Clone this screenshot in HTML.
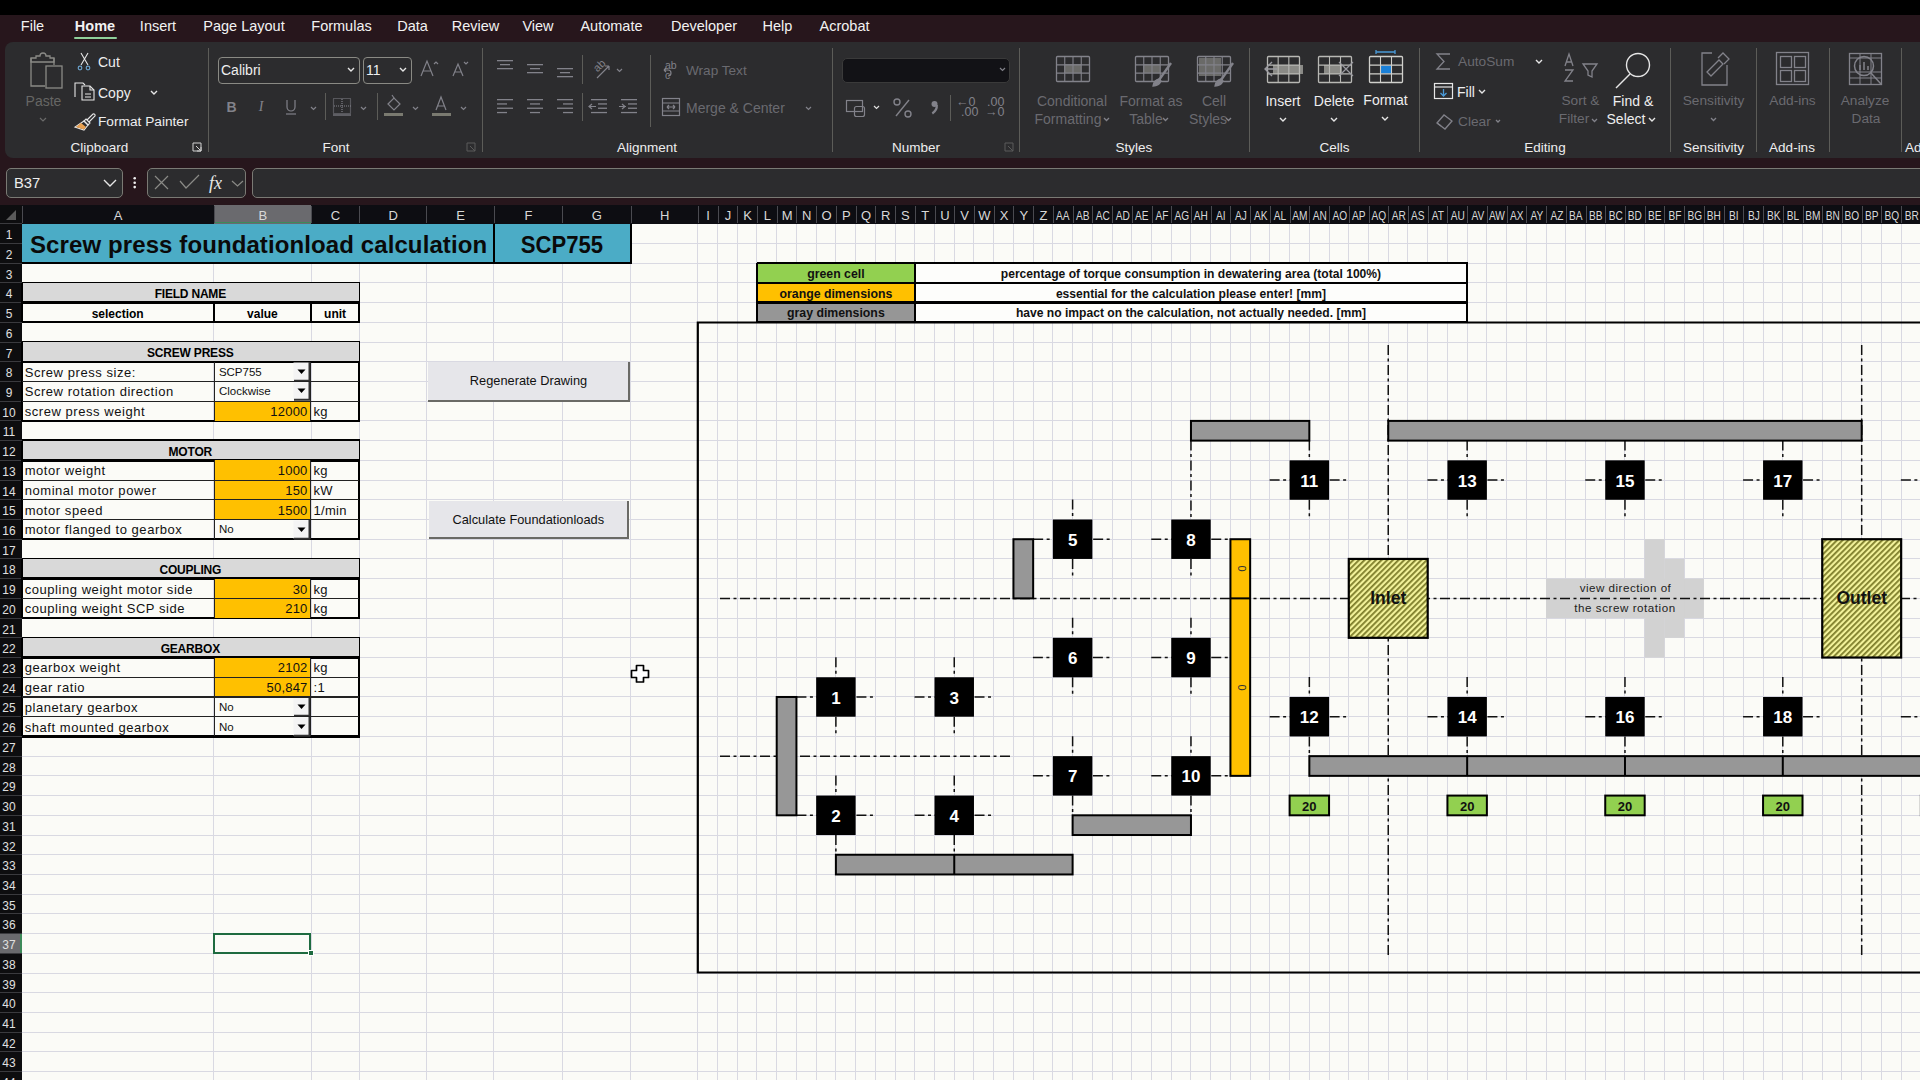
<!DOCTYPE html><html><head><meta charset="utf-8"><style>
html,body{margin:0;padding:0;width:1920px;height:1080px;overflow:hidden;background:#fbfbf7;}
body{position:relative;font-family:"Liberation Sans",sans-serif;}
div{position:absolute;box-sizing:border-box;}
svg{position:absolute;overflow:visible;}
</style></head><body>
<div style="left:0px;top:0px;width:1920px;height:15px;background:#000"></div>
<div style="left:0px;top:15px;width:1920px;height:190px;background:#27161c"></div>
<div style="left:5px;top:42px;width:1930px;height:116px;background:#2c2c2e;border-radius:8px"></div>
<div style="top:18.73px;font-size:14.5px;line-height:14.5px;font-weight:400;color:#f2f2f2;white-space:nowrap;left:-27.5px;width:120px;text-align:center;">File</div>
<div style="top:18.73px;font-size:14.5px;line-height:14.5px;font-weight:700;color:#f2f2f2;white-space:nowrap;left:35px;width:120px;text-align:center;">Home</div>
<div style="top:18.73px;font-size:14.5px;line-height:14.5px;font-weight:400;color:#f2f2f2;white-space:nowrap;left:98px;width:120px;text-align:center;">Insert</div>
<div style="top:18.73px;font-size:14.5px;line-height:14.5px;font-weight:400;color:#f2f2f2;white-space:nowrap;left:184px;width:120px;text-align:center;">Page Layout</div>
<div style="top:18.73px;font-size:14.5px;line-height:14.5px;font-weight:400;color:#f2f2f2;white-space:nowrap;left:281.5px;width:120px;text-align:center;">Formulas</div>
<div style="top:18.73px;font-size:14.5px;line-height:14.5px;font-weight:400;color:#f2f2f2;white-space:nowrap;left:352.5px;width:120px;text-align:center;">Data</div>
<div style="top:18.73px;font-size:14.5px;line-height:14.5px;font-weight:400;color:#f2f2f2;white-space:nowrap;left:415.5px;width:120px;text-align:center;">Review</div>
<div style="top:18.73px;font-size:14.5px;line-height:14.5px;font-weight:400;color:#f2f2f2;white-space:nowrap;left:478px;width:120px;text-align:center;">View</div>
<div style="top:18.73px;font-size:14.5px;line-height:14.5px;font-weight:400;color:#f2f2f2;white-space:nowrap;left:551.5px;width:120px;text-align:center;">Automate</div>
<div style="top:18.73px;font-size:14.5px;line-height:14.5px;font-weight:400;color:#f2f2f2;white-space:nowrap;left:644px;width:120px;text-align:center;">Developer</div>
<div style="top:18.73px;font-size:14.5px;line-height:14.5px;font-weight:400;color:#f2f2f2;white-space:nowrap;left:717.5px;width:120px;text-align:center;">Help</div>
<div style="top:18.73px;font-size:14.5px;line-height:14.5px;font-weight:400;color:#f2f2f2;white-space:nowrap;left:784.5px;width:120px;text-align:center;">Acrobat</div>
<div style="left:74px;top:36.5px;width:43px;height:2.5px;background:#8fcf9a;border-radius:1px"></div>
<div style="left:207.5px;top:48px;width:1px;height:104px;background:#5c5c58"></div>
<div style="left:481.5px;top:48px;width:1px;height:104px;background:#5c5c58"></div>
<div style="left:831.5px;top:48px;width:1px;height:104px;background:#5c5c58"></div>
<div style="left:1019px;top:48px;width:1px;height:104px;background:#5c5c58"></div>
<div style="left:1249px;top:48px;width:1px;height:104px;background:#5c5c58"></div>
<div style="left:1419px;top:48px;width:1px;height:104px;background:#5c5c58"></div>
<div style="left:1670px;top:48px;width:1px;height:104px;background:#5c5c58"></div>
<div style="left:1756px;top:48px;width:1px;height:104px;background:#5c5c58"></div>
<div style="left:1829px;top:48px;width:1px;height:104px;background:#5c5c58"></div>
<div style="left:1901px;top:48px;width:1px;height:104px;background:#5c5c58"></div>
<div style="left:325px;top:93px;width:1px;height:27px;background:#5c5c58"></div>
<div style="left:377px;top:93px;width:1px;height:27px;background:#5c5c58"></div>
<div style="left:582px;top:55px;width:1px;height:29px;background:#5c5c58"></div>
<div style="left:582px;top:93px;width:1px;height:28px;background:#5c5c58"></div>
<div style="left:650px;top:55px;width:1px;height:72px;background:#5c5c58"></div>
<div style="left:950px;top:95px;width:1px;height:26px;background:#5c5c58"></div>
<div style="top:140.57px;font-size:13.5px;line-height:13.5px;font-weight:400;color:#eeeeee;white-space:nowrap;left:39.5px;width:120px;text-align:center;">Clipboard</div>
<div style="top:140.57px;font-size:13.5px;line-height:13.5px;font-weight:400;color:#eeeeee;white-space:nowrap;left:276px;width:120px;text-align:center;">Font</div>
<div style="top:140.57px;font-size:13.5px;line-height:13.5px;font-weight:400;color:#eeeeee;white-space:nowrap;left:587px;width:120px;text-align:center;">Alignment</div>
<div style="top:140.57px;font-size:13.5px;line-height:13.5px;font-weight:400;color:#eeeeee;white-space:nowrap;left:856px;width:120px;text-align:center;">Number</div>
<div style="top:140.57px;font-size:13.5px;line-height:13.5px;font-weight:400;color:#eeeeee;white-space:nowrap;left:1074px;width:120px;text-align:center;">Styles</div>
<div style="top:140.57px;font-size:13.5px;line-height:13.5px;font-weight:400;color:#eeeeee;white-space:nowrap;left:1274.5px;width:120px;text-align:center;">Cells</div>
<div style="top:140.57px;font-size:13.5px;line-height:13.5px;font-weight:400;color:#eeeeee;white-space:nowrap;left:1485px;width:120px;text-align:center;">Editing</div>
<div style="top:140.57px;font-size:13.5px;line-height:13.5px;font-weight:400;color:#eeeeee;white-space:nowrap;left:1653.5px;width:120px;text-align:center;">Sensitivity</div>
<div style="top:140.57px;font-size:13.5px;line-height:13.5px;font-weight:400;color:#eeeeee;white-space:nowrap;left:1732px;width:120px;text-align:center;">Add-ins</div>
<div style="top:140.57px;font-size:13.5px;line-height:13.5px;font-weight:400;color:#eeeeee;white-space:nowrap;left:1905px;">Ad</div>
<svg style="left:0;top:0" width="1920" height="200">
<g fill="none" stroke="#8a8a86" stroke-width="1.3">
 <path d="M31 58 h5 v-2 h4 a3 3 0 0 1 6 0 h4 v2 h4 v4 h-23 z"/>
 <path d="M31 58 v28 h14"/>
 <path d="M54 58 v7"/>
 <rect x="46" y="66" width="16" height="22"/>
</g>
<g fill="none" stroke="#e6e6e6" stroke-width="1.1">
 <path d="M81 53 l7 12 M88 53 l-7 12"/>
 <path d="M75 97 v-14 h8 l2 2"/><path d="M82 86 h8 l4 4 v10 h-12 z"/><path d="M90 86 v4 h4"/>
 <path d="M85 94 h6 M85 97 h6"/>
 <path d="M87 120 l6 -6 a1.5 1.5 0 0 1 2 2 l-6 6"/>
 <path d="M86 119 l4 4 l-2 2 l-4 -4 z"/>
 <path d="M84 121 l4 4 l-4 5 l-9 -3 z"/>
</g>
<circle cx="80" cy="68" r="1.8" fill="none" stroke="#6aa0c8" stroke-width="1.2"/>
<circle cx="88" cy="68" r="1.8" fill="none" stroke="#6aa0c8" stroke-width="1.2"/>
<path d="M76 127 l5 -4 l5 4 l-2 2.5 z" fill="#e8a050"/>
<path d="M193 143 h8 v8 h-8 z M196 146 l5 5 M201 147 v4 h-4" fill="none" stroke="#d0d0d0" stroke-width="1"/>
<path d="M40 118 l3 3 l3 -3" fill="none" stroke="#6a6a6a" stroke-width="1.2"/>
<path d="M151 91 l3 3 l3 -3" fill="none" stroke="#e6e6e6" stroke-width="1.4"/>
</g>
</svg>
<div style="top:94.15px;font-size:14px;line-height:14px;font-weight:400;color:#666664;white-space:nowrap;left:13.5px;width:60px;text-align:center;">Paste</div>
<div style="top:55.15px;font-size:14px;line-height:14px;font-weight:400;color:#eeeeee;white-space:nowrap;left:98px;">Cut</div>
<div style="top:86.15px;font-size:14px;line-height:14px;font-weight:400;color:#eeeeee;white-space:nowrap;left:98px;">Copy</div>
<div style="top:115.4px;font-size:13.7px;line-height:13.7px;font-weight:400;color:#eeeeee;white-space:nowrap;left:98px;">Format Painter</div>
<div style="left:217.5px;top:56.5px;width:142px;height:27px;border:1px solid #8a8a84;border-radius:4px"></div>
<div style="left:362.5px;top:56.5px;width:49.5px;height:27px;border:1px solid #8a8a84;border-radius:4px"></div>
<div style="top:63.15px;font-size:14px;line-height:14px;font-weight:400;color:#eeeeee;white-space:nowrap;left:221px;">Calibri</div>
<div style="top:63.15px;font-size:14px;line-height:14px;font-weight:400;color:#eeeeee;white-space:nowrap;left:366px;">11</div>
<svg style="left:0;top:0" width="1920" height="200">
<g fill="none" stroke="#e6e6e6" stroke-width="1.4">
 <path d="M348 68 l3 3 l3 -3"/><path d="M400 68 l3 3 l3 -3"/>
</g>
<g fill="none" stroke="#82828a" stroke-width="1.2">
 <path d="M421 76 l6-15 l6 15 M423.5 71 h7"/><path d="M434 64 l2-2 l2 2"/>
 <path d="M453 76 l5-12 l5 12 M455 72 h6"/><path d="M464 62 l2 2 l2-2"/>
 <path d="M311 107 l2.5 2.5 l2.5-2.5"/><path d="M361 107 l2.5 2.5 l2.5-2.5"/><path d="M413 107 l2.5 2.5 l2.5-2.5"/><path d="M461 107 l2.5 2.5 l2.5-2.5"/>
 <path d="M287 100 v7 a4 4 0 0 0 8 0 v-7"/><path d="M286 114 h10"/>
 <rect x="333.5" y="98.5" width="17" height="15" stroke-dasharray="1 1"/><path d="M342 99 v14 M334 106 h17" stroke-dasharray="1 1"/><path d="M333 115 h18"/>
 <path d="M388 104 l6-6 l6 6 l-6 6 z"/><path d="M394 98 l-2-3"/>
 <path d="M436 110 l5-13 l5 13 M438 106 h6"/>
</g>
<rect x="384" y="113" width="19" height="3" fill="#7a7a70"/>
<rect x="432" y="113" width="19" height="3" fill="#7a7a70"/>
<path d="M467 143 h8 v8 h-8 z M470 146 l5 5" fill="none" stroke="#5a5a5a" stroke-width="1"/>
</svg>
<div style="top:100.15px;font-size:14px;line-height:14px;font-weight:700;color:#82828a;white-space:nowrap;left:221.5px;width:20px;text-align:center;">B</div>
<div style="top:100.15px;font-size:14px;line-height:14px;font-weight:400;color:#82828a;white-space:nowrap;left:251px;width:20px;text-align:center;font-style:italic;font-family:'Liberation Serif',serif;">I</div>
<svg style="left:0;top:0" width="1920" height="200"><rect x="497" y="60" width="16" height="1.3" fill="#82828a"/><rect x="500" y="64" width="10" height="1.3" fill="#82828a"/><rect x="497" y="68" width="16" height="1.3" fill="#82828a"/><rect x="527" y="64" width="16" height="1.3" fill="#82828a"/><rect x="530" y="68" width="10" height="1.3" fill="#82828a"/><rect x="527" y="72" width="16" height="1.3" fill="#82828a"/><rect x="557" y="68" width="16" height="1.3" fill="#82828a"/><rect x="560" y="72" width="10" height="1.3" fill="#82828a"/><rect x="557" y="76" width="16" height="1.3" fill="#82828a"/><rect x="497" y="99" width="16" height="1.3" fill="#82828a"/><rect x="497" y="103.3" width="10" height="1.3" fill="#82828a"/><rect x="497" y="107.6" width="16" height="1.3" fill="#82828a"/><rect x="497" y="111.9" width="10" height="1.3" fill="#82828a"/><rect x="527" y="99" width="16" height="1.3" fill="#82828a"/><rect x="530" y="103.3" width="10" height="1.3" fill="#82828a"/><rect x="527" y="107.6" width="16" height="1.3" fill="#82828a"/><rect x="530" y="111.9" width="10" height="1.3" fill="#82828a"/><rect x="557" y="99" width="16" height="1.3" fill="#82828a"/><rect x="563" y="103.3" width="10" height="1.3" fill="#82828a"/><rect x="557" y="107.6" width="16" height="1.3" fill="#82828a"/><rect x="563" y="111.9" width="10" height="1.3" fill="#82828a"/><rect x="591" y="99" width="16" height="1.3" fill="#82828a"/><rect x="598" y="103.3" width="9" height="1.3" fill="#82828a"/><rect x="598" y="107.6" width="9" height="1.3" fill="#82828a"/><rect x="591" y="111.9" width="16" height="1.3" fill="#82828a"/><rect x="621" y="99" width="16" height="1.3" fill="#82828a"/><rect x="628" y="103.3" width="9" height="1.3" fill="#82828a"/><rect x="628" y="107.6" width="9" height="1.3" fill="#82828a"/><rect x="621" y="111.9" width="16" height="1.3" fill="#82828a"/><g fill="none" stroke="#82828a" stroke-width="1.2">
 <path d="M592 104 l-3 2.5 l3 2.5 M589 106.5 h7"/><path d="M622 104 l3 2.5 l-3 2.5 M619 106.5 h7"/>
 <path d="M597 78 l12 -12 M609 66 h-4 M609 66 v4"/>
 <path d="M617 69 l2.5 2.5 l2.5-2.5"/><path d="M806 107 l2.5 2.5 l2.5-2.5"/>
 <rect x="662.5" y="98.5" width="17" height="17"/><path d="M663 103 h16 M663 111 h16 M667 107 h8 M667 107 l2 -2 M667 107 l2 2 M675 107 l-2 -2 M675 107 l-2 2"/>
 <path d="M668 76 a3 3 0 0 0 0 -6 h-4 M664 70 l2-2 M664 70 l2 2"/>
</g></svg>
<div style="top:62.69px;font-size:11px;line-height:11px;font-weight:400;color:#82828a;white-space:nowrap;left:599px;transform:rotate(-45deg);transform-origin:left bottom;">ab</div>
<div style="top:60.11px;font-size:10.5px;line-height:10.5px;font-weight:400;color:#82828a;white-space:nowrap;left:665px;">ab</div>
<div style="top:70.11px;font-size:10.5px;line-height:10.5px;font-weight:400;color:#82828a;white-space:nowrap;left:665px;">c</div>
<div style="top:64.49px;font-size:13.6px;line-height:13.6px;font-weight:400;color:#6a6a70;white-space:nowrap;left:686px;">Wrap Text</div>
<div style="top:101.15px;font-size:14px;line-height:14px;font-weight:400;color:#6a6a70;white-space:nowrap;left:686px;">Merge &amp; Center</div>
<div style="left:842px;top:57.5px;width:167.5px;height:25.5px;background:#121216;border:1px solid #3a3a3a;border-radius:5px"></div>
<svg style="left:0;top:0" width="1920" height="200">
<g fill="none" stroke="#82828a" stroke-width="1.2">
 <path d="M1000 68 l2.5 2.5 l2.5-2.5"/>
 <rect x="846.5" y="100.5" width="16" height="11"/><rect x="854.5" y="106.5" width="10" height="10" rx="2"/>
 <path d="M874 106 l2.5 2.5 l2.5-2.5" stroke="#e0e0e0"/>
 <path d="M1005 143 h8 v8 h-8 z M1008 146 l5 5" stroke="#5a5a5a" stroke-width="1"/>
</g>
<g fill="none" stroke="#82828a" stroke-width="1.4">
 <path d="M896 116 l13 -16"/><circle cx="897" cy="102" r="3"/><circle cx="908" cy="114" r="3"/>
</g>
<circle cx="934.5" cy="104" r="3" fill="#82828a"/><path d="M936.8 105 q0.5 5 -4.5 8.5" fill="none" stroke="#82828a" stroke-width="2.2"/>
</svg>
<div style="top:96.42px;font-size:12.5px;line-height:12.5px;font-weight:400;color:#82828a;white-space:nowrap;left:956px;">&#8592;0</div>
<div style="top:106.42px;font-size:12.5px;line-height:12.5px;font-weight:400;color:#82828a;white-space:nowrap;left:961px;">.00</div>
<div style="top:96.42px;font-size:12.5px;line-height:12.5px;font-weight:400;color:#82828a;white-space:nowrap;left:987px;">.00</div>
<div style="top:106.42px;font-size:12.5px;line-height:12.5px;font-weight:400;color:#82828a;white-space:nowrap;left:985px;">&#8594;0</div>
<svg style="left:0;top:0" width="1920" height="200"><rect x="1064" y="64" width="17" height="9" fill="#6a6a68"/><rect x="1056.5" y="56.5" width="33" height="25" fill="none" stroke="#82828a" stroke-width="1.3" rx="1"/><path d="M1064.75 56 v26" stroke="#82828a" stroke-width="1.1"/><path d="M1073 56 v26" stroke="#82828a" stroke-width="1.1"/><path d="M1081.25 56 v26" stroke="#82828a" stroke-width="1.1"/><path d="M1056 64.83 h34" stroke="#82828a" stroke-width="1.1"/><path d="M1056 73.17 h34" stroke="#82828a" stroke-width="1.1"/><rect x="1143" y="64" width="17" height="9" fill="#6a6a68"/><rect x="1135.5" y="56.5" width="33" height="25" fill="none" stroke="#82828a" stroke-width="1.3" rx="1"/><path d="M1143.75 56 v26" stroke="#82828a" stroke-width="1.1"/><path d="M1152 56 v26" stroke="#82828a" stroke-width="1.1"/><path d="M1160.25 56 v26" stroke="#82828a" stroke-width="1.1"/><path d="M1135 64.83 h34" stroke="#82828a" stroke-width="1.1"/><path d="M1135 73.17 h34" stroke="#82828a" stroke-width="1.1"/><rect x="1199" y="58" width="22" height="18" fill="#6a6a68"/><rect x="1197.5" y="56.5" width="33" height="25" fill="none" stroke="#82828a" stroke-width="1.3" rx="1"/><path d="M1205.75 56 v26" stroke="#82828a" stroke-width="1.1"/><path d="M1214 56 v26" stroke="#82828a" stroke-width="1.1"/><path d="M1222.25 56 v26" stroke="#82828a" stroke-width="1.1"/><path d="M1197 64.83 h34" stroke="#82828a" stroke-width="1.1"/><path d="M1197 73.17 h34" stroke="#82828a" stroke-width="1.1"/><rect x="1273" y="65" width="30" height="9" fill="#8a8a86"/><rect x="1267.5" y="56.5" width="32" height="26" fill="none" stroke="#b8b8b4" stroke-width="1.3" rx="1"/><path d="M1278.17 56 v27" stroke="#b8b8b4" stroke-width="1.1"/><path d="M1288.83 56 v27" stroke="#b8b8b4" stroke-width="1.1"/><path d="M1267 65.17 h33" stroke="#b8b8b4" stroke-width="1.1"/><path d="M1267 73.83 h33" stroke="#b8b8b4" stroke-width="1.1"/><rect x="1324" y="65" width="18" height="9" fill="#8a8a86"/><rect x="1318.5" y="56.5" width="33" height="26" fill="none" stroke="#b8b8b4" stroke-width="1.3" rx="1"/><path d="M1329.5 56 v27" stroke="#b8b8b4" stroke-width="1.1"/><path d="M1340.5 56 v27" stroke="#b8b8b4" stroke-width="1.1"/><path d="M1318 65.17 h34" stroke="#b8b8b4" stroke-width="1.1"/><path d="M1318 73.83 h34" stroke="#b8b8b4" stroke-width="1.1"/><rect x="1380" y="65.5" width="12" height="8" fill="#1a80d8"/><rect x="1369.5" y="56.5" width="33" height="26" fill="none" stroke="#d0d0cc" stroke-width="1.3" rx="1"/><path d="M1380.5 56 v27" stroke="#d0d0cc" stroke-width="1.1"/><path d="M1391.5 56 v27" stroke="#d0d0cc" stroke-width="1.1"/><path d="M1369 65.17 h34" stroke="#d0d0cc" stroke-width="1.1"/><path d="M1369 73.83 h34" stroke="#d0d0cc" stroke-width="1.1"/><g fill="none" stroke="#82828a" stroke-width="1.3">
 <path d="M1171 63 l-12 17" stroke-width="2.4"/><path d="M1159 79 q-5 1 -6 7 q6 0 8 -5 z" fill="#82828a"/><path d="M1233 63 l-12 17" stroke-width="2.4"/><path d="M1221 79 q-5 1 -6 7 q6 0 8 -5 z" fill="#82828a"/>
 <path d="M1272 62 l-7 7 l7 7 M1265 69 h12" stroke="#9a9aa0" stroke-width="1.4"/><path d="M1339 62 l14 14 M1353 62 l-14 14" stroke="#9a9aa0"/>
 <path d="M1376 52 h19 M1376 50 v4 M1395 50 v4" stroke="#4a9ad8"/>
 <path d="M1104 118 l2.5 2.5 l2.5-2.5"/><path d="M1163 118 l2.5 2.5 l2.5-2.5"/><path d="M1226 118 l2.5 2.5 l2.5-2.5"/>
</g>
<g fill="none" stroke="#e6e6e6" stroke-width="1.4">
 <path d="M1280 118 l3 3 l3-3"/><path d="M1331 118 l3 3 l3-3"/><path d="M1382 117 l3 3 l3-3"/>
</g>
</svg>
<div style="top:94.15px;font-size:14px;line-height:14px;font-weight:400;color:#6a6a70;white-space:nowrap;left:1022px;width:100px;text-align:center;">Conditional</div>
<div style="top:112.15px;font-size:14px;line-height:14px;font-weight:400;color:#6a6a70;white-space:nowrap;left:1018px;width:100px;text-align:center;">Formatting</div>
<div style="top:94.15px;font-size:14px;line-height:14px;font-weight:400;color:#6a6a70;white-space:nowrap;left:1101px;width:100px;text-align:center;">Format as</div>
<div style="top:112.15px;font-size:14px;line-height:14px;font-weight:400;color:#6a6a70;white-space:nowrap;left:1096px;width:100px;text-align:center;">Table</div>
<div style="top:94.15px;font-size:14px;line-height:14px;font-weight:400;color:#6a6a70;white-space:nowrap;left:1164px;width:100px;text-align:center;">Cell</div>
<div style="top:112.15px;font-size:14px;line-height:14px;font-weight:400;color:#6a6a70;white-space:nowrap;left:1158px;width:100px;text-align:center;">Styles</div>
<div style="top:94.15px;font-size:14px;line-height:14px;font-weight:400;color:#eeeeee;white-space:nowrap;left:1233px;width:100px;text-align:center;">Insert</div>
<div style="top:94.15px;font-size:14px;line-height:14px;font-weight:400;color:#eeeeee;white-space:nowrap;left:1284px;width:100px;text-align:center;">Delete</div>
<div style="top:93.15px;font-size:14px;line-height:14px;font-weight:400;color:#eeeeee;white-space:nowrap;left:1335.5px;width:100px;text-align:center;">Format</div>
<svg style="left:0;top:0" width="1920" height="200">
<g fill="none" stroke="#82828a" stroke-width="1.3">
 <path d="M1450 54 h-13 l7 7.5 l-7 7.5 h13"/>
 <path d="M1437 123 l7-8 l8 6 l-7 8 z"/><path d="M1437 123 l4 3"/>
 <path d="M1583 64 h14 l-5 7 v6 l-4 -2 v-4 z"/>
 <path d="M1565 66 l4-12 l4 12 M1566.5 62 h5"/><path d="M1565 70 h8 l-8 11 h8"/>
 <path d="M1592 119 l2.5 2.5 l2.5-2.5"/><path d="M1496 120 l2 2 l2-2"/>
</g>
<g fill="none" stroke="#e6e6e6" stroke-width="1.4">
 <path d="M1536 60 l3 3 l3-3"/><path d="M1479 90 l3 3 l3-3"/><path d="M1649 118 l3 3 l3-3"/>
 <circle cx="1638" cy="65" r="11.5"/><path d="M1630 74 l-14 14"/>
 <rect x="1434.5" y="83.5" width="18" height="15" stroke-width="1.2"/><path d="M1435 87 h17" stroke-width="1.2"/>
</g>
<path d="M1443.5 89 v7 M1440.5 93 l3 3 l3-3" fill="none" stroke="#4a9ad8" stroke-width="1.3"/>
</svg>
<div style="top:55.4px;font-size:13.7px;line-height:13.7px;font-weight:400;color:#6a6a70;white-space:nowrap;left:1458px;">AutoSum</div>
<div style="top:85.15px;font-size:14px;line-height:14px;font-weight:400;color:#eeeeee;white-space:nowrap;left:1457px;">Fill</div>
<div style="top:115.4px;font-size:13.7px;line-height:13.7px;font-weight:400;color:#6a6a70;white-space:nowrap;left:1458px;">Clear</div>
<div style="top:94.4px;font-size:13.7px;line-height:13.7px;font-weight:400;color:#6a6a70;white-space:nowrap;left:1540.5px;width:80px;text-align:center;">Sort &amp;</div>
<div style="top:112.4px;font-size:13.7px;line-height:13.7px;font-weight:400;color:#6a6a70;white-space:nowrap;left:1534px;width:80px;text-align:center;">Filter</div>
<div style="top:94.15px;font-size:14px;line-height:14px;font-weight:400;color:#eeeeee;white-space:nowrap;left:1593px;width:80px;text-align:center;">Find &amp;</div>
<div style="top:112.15px;font-size:14px;line-height:14px;font-weight:400;color:#eeeeee;white-space:nowrap;left:1586px;width:80px;text-align:center;">Select</div>
<svg style="left:0;top:0" width="1920" height="200">
<g fill="none" stroke="#82828a" stroke-width="1.3">
 <path d="M1712 53 h-10 v32 h25 v-20"/><path d="M1707 72 l12-12 l4 4 l-12 12 z"/><path d="M1718 58 l5-5 l6 6 l-5 5"/>
 <path d="M1711 118 l2.5 2.5 l2.5-2.5"/>
 <rect x="1776.5" y="52.5" width="32" height="32"/><rect x="1780.5" y="56.5" width="11" height="11"/><rect x="1794.5" y="56.5" width="11" height="11"/>
 <rect x="1780.5" y="70.5" width="11" height="11"/><rect x="1794.5" y="70.5" width="11" height="11"/>
 <rect x="1849.5" y="53.5" width="32" height="31"/><path d="M1850 58 h31 M1850 72 h31 M1850 78 h31 M1860 53 v32 M1871 53 v32" stroke-width="1"/>
 <circle cx="1864" cy="66" r="9.5" stroke-width="1.5"/><path d="M1871 73 l10 11" stroke-width="1.5"/>
 <path d="M1860 70 v-5 M1864 70 v-8 M1868 70 v-4" stroke-width="1.5"/>
</g>
</svg>
<div style="top:94.4px;font-size:13.7px;line-height:13.7px;font-weight:400;color:#6a6a70;white-space:nowrap;left:1663.5px;width:100px;text-align:center;">Sensitivity</div>
<div style="top:94.4px;font-size:13.7px;line-height:13.7px;font-weight:400;color:#6a6a70;white-space:nowrap;left:1742.5px;width:100px;text-align:center;">Add-ins</div>
<div style="top:94.4px;font-size:13.7px;line-height:13.7px;font-weight:400;color:#6a6a70;white-space:nowrap;left:1815px;width:100px;text-align:center;">Analyze</div>
<div style="top:112.4px;font-size:13.7px;line-height:13.7px;font-weight:400;color:#6a6a70;white-space:nowrap;left:1816px;width:100px;text-align:center;">Data</div>
<div style="left:5.5px;top:167.5px;width:117.5px;height:30px;background:#2c2c2e;border:1px solid #7a7a74;border-radius:5px"></div>
<div style="left:147px;top:167.5px;width:99px;height:30px;background:#2c2c2e;border:1px solid #7a7a74;border-radius:5px"></div>
<div style="top:176.47px;font-size:14.8px;line-height:14.8px;font-weight:400;color:#eeeeee;white-space:nowrap;left:14px;">B37</div>
<svg style="left:0;top:0" width="1920" height="200">
<path d="M104 180 l6 6 l6-6" fill="none" stroke="#e6e6e6" stroke-width="1.4"/>
<circle cx="134.7" cy="178.3" r="1.3" fill="#f0f0f0"/><circle cx="134.7" cy="182.7" r="1.3" fill="#f0f0f0"/><circle cx="134.7" cy="187.1" r="1.3" fill="#f0f0f0"/>
<g fill="none" stroke="#8a8a86" stroke-width="1.2">
<path d="M155 176 l13 13 M168 176 l-13 13"/><path d="M180 181 l6 7 l13-13"/>
<path d="M232 181 l5.5 5 l5.5-5"/>
</g>
</svg>
<div style="top:173.76px;font-size:18px;line-height:18px;font-weight:400;color:#e8e8e8;white-space:nowrap;font-family:'Liberation Serif',serif;left:209px;"><i>fx</i></div>
<div style="left:251.5px;top:167.5px;width:1700px;height:30px;background:#2c2c2e;border:1px solid #7a7a74;border-radius:5px"></div>
<div style="left:0px;top:205px;width:1920px;height:18.7px;background:#0d0d12"></div>
<div style="left:0px;top:205px;width:21.5px;height:875px;background:#0d0d0f"></div>
<svg style="left:0;top:0" width="22" height="223"><path d="M16 220 v-10 l-10 10 z" fill="#5a5a5a"/></svg>
<div style="left:213.9px;top:205px;width:97.1px;height:18.7px;background:#6a6a6e"></div>
<div style="left:213.9px;top:221.5px;width:97.1px;height:1.5px;background:#3d8a5a"></div>
<div style="left:21.5px;top:206px;width:1px;height:17px;background:#4a4a50"></div>
<div style="top:208.5px;font-size:13px;line-height:13px;font-weight:400;color:#d8d8d8;white-space:nowrap;left:12px;width:212.4px;text-align:center;">A</div>
<div style="left:213.9px;top:206px;width:1px;height:17px;background:#4a4a50"></div>
<div style="top:208.5px;font-size:13px;line-height:13px;font-weight:400;color:#d8d8d8;white-space:nowrap;left:204.4px;width:117.1px;text-align:center;">B</div>
<div style="left:311px;top:206px;width:1px;height:17px;background:#4a4a50"></div>
<div style="top:208.5px;font-size:13px;line-height:13px;font-weight:400;color:#d8d8d8;white-space:nowrap;left:301.5px;width:68.1px;text-align:center;">C</div>
<div style="left:359.1px;top:206px;width:1px;height:17px;background:#4a4a50"></div>
<div style="top:208.5px;font-size:13px;line-height:13px;font-weight:400;color:#d8d8d8;white-space:nowrap;left:349.6px;width:87.1px;text-align:center;">D</div>
<div style="left:426.2px;top:206px;width:1px;height:17px;background:#4a4a50"></div>
<div style="top:208.5px;font-size:13px;line-height:13px;font-weight:400;color:#d8d8d8;white-space:nowrap;left:416.7px;width:87.7px;text-align:center;">E</div>
<div style="left:493.9px;top:206px;width:1px;height:17px;background:#4a4a50"></div>
<div style="top:208.5px;font-size:13px;line-height:13px;font-weight:400;color:#d8d8d8;white-space:nowrap;left:484.4px;width:88.3px;text-align:center;">F</div>
<div style="left:562.2px;top:206px;width:1px;height:17px;background:#4a4a50"></div>
<div style="top:208.5px;font-size:13px;line-height:13px;font-weight:400;color:#d8d8d8;white-space:nowrap;left:552.7px;width:88.4px;text-align:center;">G</div>
<div style="left:630.6px;top:206px;width:1px;height:17px;background:#4a4a50"></div>
<div style="top:208.5px;font-size:13px;line-height:13px;font-weight:400;color:#d8d8d8;white-space:nowrap;left:621.1px;width:87.2px;text-align:center;">H</div>
<div style="left:697.8px;top:206px;width:1px;height:17px;background:#4a4a50"></div>
<div style="top:208.5px;font-size:13px;line-height:13px;font-weight:400;color:#d8d8d8;white-space:nowrap;left:688.3px;width:39.73px;text-align:center;">I</div>
<div style="left:717.53px;top:206px;width:1px;height:17px;background:#4a4a50"></div>
<div style="top:208.5px;font-size:13px;line-height:13px;font-weight:400;color:#d8d8d8;white-space:nowrap;left:708.03px;width:39.73px;text-align:center;">J</div>
<div style="left:737.25px;top:206px;width:1px;height:17px;background:#4a4a50"></div>
<div style="top:208.5px;font-size:13px;line-height:13px;font-weight:400;color:#d8d8d8;white-space:nowrap;left:727.75px;width:39.73px;text-align:center;">K</div>
<div style="left:756.98px;top:206px;width:1px;height:17px;background:#4a4a50"></div>
<div style="top:208.5px;font-size:13px;line-height:13px;font-weight:400;color:#d8d8d8;white-space:nowrap;left:747.48px;width:39.73px;text-align:center;">L</div>
<div style="left:776.71px;top:206px;width:1px;height:17px;background:#4a4a50"></div>
<div style="top:208.5px;font-size:13px;line-height:13px;font-weight:400;color:#d8d8d8;white-space:nowrap;left:767.21px;width:39.73px;text-align:center;">M</div>
<div style="left:796.43px;top:206px;width:1px;height:17px;background:#4a4a50"></div>
<div style="top:208.5px;font-size:13px;line-height:13px;font-weight:400;color:#d8d8d8;white-space:nowrap;left:786.93px;width:39.73px;text-align:center;">N</div>
<div style="left:816.16px;top:206px;width:1px;height:17px;background:#4a4a50"></div>
<div style="top:208.5px;font-size:13px;line-height:13px;font-weight:400;color:#d8d8d8;white-space:nowrap;left:806.66px;width:39.73px;text-align:center;">O</div>
<div style="left:835.89px;top:206px;width:1px;height:17px;background:#4a4a50"></div>
<div style="top:208.5px;font-size:13px;line-height:13px;font-weight:400;color:#d8d8d8;white-space:nowrap;left:826.39px;width:39.73px;text-align:center;">P</div>
<div style="left:855.62px;top:206px;width:1px;height:17px;background:#4a4a50"></div>
<div style="top:208.5px;font-size:13px;line-height:13px;font-weight:400;color:#d8d8d8;white-space:nowrap;left:846.12px;width:39.73px;text-align:center;">Q</div>
<div style="left:875.34px;top:206px;width:1px;height:17px;background:#4a4a50"></div>
<div style="top:208.5px;font-size:13px;line-height:13px;font-weight:400;color:#d8d8d8;white-space:nowrap;left:865.84px;width:39.73px;text-align:center;">R</div>
<div style="left:895.07px;top:206px;width:1px;height:17px;background:#4a4a50"></div>
<div style="top:208.5px;font-size:13px;line-height:13px;font-weight:400;color:#d8d8d8;white-space:nowrap;left:885.57px;width:39.73px;text-align:center;">S</div>
<div style="left:914.8px;top:206px;width:1px;height:17px;background:#4a4a50"></div>
<div style="top:208.5px;font-size:13px;line-height:13px;font-weight:400;color:#d8d8d8;white-space:nowrap;left:905.3px;width:39.73px;text-align:center;">T</div>
<div style="left:934.52px;top:206px;width:1px;height:17px;background:#4a4a50"></div>
<div style="top:208.5px;font-size:13px;line-height:13px;font-weight:400;color:#d8d8d8;white-space:nowrap;left:925.02px;width:39.73px;text-align:center;">U</div>
<div style="left:954.25px;top:206px;width:1px;height:17px;background:#4a4a50"></div>
<div style="top:208.5px;font-size:13px;line-height:13px;font-weight:400;color:#d8d8d8;white-space:nowrap;left:944.75px;width:39.73px;text-align:center;">V</div>
<div style="left:973.98px;top:206px;width:1px;height:17px;background:#4a4a50"></div>
<div style="top:208.5px;font-size:13px;line-height:13px;font-weight:400;color:#d8d8d8;white-space:nowrap;left:964.48px;width:39.73px;text-align:center;">W</div>
<div style="left:993.7px;top:206px;width:1px;height:17px;background:#4a4a50"></div>
<div style="top:208.5px;font-size:13px;line-height:13px;font-weight:400;color:#d8d8d8;white-space:nowrap;left:984.2px;width:39.73px;text-align:center;">X</div>
<div style="left:1013.43px;top:206px;width:1px;height:17px;background:#4a4a50"></div>
<div style="top:208.5px;font-size:13px;line-height:13px;font-weight:400;color:#d8d8d8;white-space:nowrap;left:1003.93px;width:39.73px;text-align:center;">Y</div>
<div style="left:1033.16px;top:206px;width:1px;height:17px;background:#4a4a50"></div>
<div style="top:208.5px;font-size:13px;line-height:13px;font-weight:400;color:#d8d8d8;white-space:nowrap;left:1023.66px;width:39.73px;text-align:center;">Z</div>
<div style="left:1052.89px;top:206px;width:1px;height:17px;background:#4a4a50"></div>
<div style="top:208.5px;font-size:13px;line-height:13px;font-weight:400;color:#d8d8d8;white-space:nowrap;left:1043.39px;width:39.73px;text-align:center;transform:scaleX(0.78);">AA</div>
<div style="left:1072.61px;top:206px;width:1px;height:17px;background:#4a4a50"></div>
<div style="top:208.5px;font-size:13px;line-height:13px;font-weight:400;color:#d8d8d8;white-space:nowrap;left:1063.11px;width:39.73px;text-align:center;transform:scaleX(0.78);">AB</div>
<div style="left:1092.34px;top:206px;width:1px;height:17px;background:#4a4a50"></div>
<div style="top:208.5px;font-size:13px;line-height:13px;font-weight:400;color:#d8d8d8;white-space:nowrap;left:1082.84px;width:39.73px;text-align:center;transform:scaleX(0.78);">AC</div>
<div style="left:1112.07px;top:206px;width:1px;height:17px;background:#4a4a50"></div>
<div style="top:208.5px;font-size:13px;line-height:13px;font-weight:400;color:#d8d8d8;white-space:nowrap;left:1102.57px;width:39.73px;text-align:center;transform:scaleX(0.78);">AD</div>
<div style="left:1131.79px;top:206px;width:1px;height:17px;background:#4a4a50"></div>
<div style="top:208.5px;font-size:13px;line-height:13px;font-weight:400;color:#d8d8d8;white-space:nowrap;left:1122.29px;width:39.73px;text-align:center;transform:scaleX(0.78);">AE</div>
<div style="left:1151.52px;top:206px;width:1px;height:17px;background:#4a4a50"></div>
<div style="top:208.5px;font-size:13px;line-height:13px;font-weight:400;color:#d8d8d8;white-space:nowrap;left:1142.02px;width:39.73px;text-align:center;transform:scaleX(0.78);">AF</div>
<div style="left:1171.25px;top:206px;width:1px;height:17px;background:#4a4a50"></div>
<div style="top:208.5px;font-size:13px;line-height:13px;font-weight:400;color:#d8d8d8;white-space:nowrap;left:1161.75px;width:39.73px;text-align:center;transform:scaleX(0.78);">AG</div>
<div style="left:1190.97px;top:206px;width:1px;height:17px;background:#4a4a50"></div>
<div style="top:208.5px;font-size:13px;line-height:13px;font-weight:400;color:#d8d8d8;white-space:nowrap;left:1181.47px;width:39.73px;text-align:center;transform:scaleX(0.78);">AH</div>
<div style="left:1210.7px;top:206px;width:1px;height:17px;background:#4a4a50"></div>
<div style="top:208.5px;font-size:13px;line-height:13px;font-weight:400;color:#d8d8d8;white-space:nowrap;left:1201.2px;width:39.73px;text-align:center;transform:scaleX(0.78);">AI</div>
<div style="left:1230.43px;top:206px;width:1px;height:17px;background:#4a4a50"></div>
<div style="top:208.5px;font-size:13px;line-height:13px;font-weight:400;color:#d8d8d8;white-space:nowrap;left:1220.93px;width:39.73px;text-align:center;transform:scaleX(0.78);">AJ</div>
<div style="left:1250.16px;top:206px;width:1px;height:17px;background:#4a4a50"></div>
<div style="top:208.5px;font-size:13px;line-height:13px;font-weight:400;color:#d8d8d8;white-space:nowrap;left:1240.66px;width:39.73px;text-align:center;transform:scaleX(0.78);">AK</div>
<div style="left:1269.88px;top:206px;width:1px;height:17px;background:#4a4a50"></div>
<div style="top:208.5px;font-size:13px;line-height:13px;font-weight:400;color:#d8d8d8;white-space:nowrap;left:1260.38px;width:39.73px;text-align:center;transform:scaleX(0.78);">AL</div>
<div style="left:1289.61px;top:206px;width:1px;height:17px;background:#4a4a50"></div>
<div style="top:208.5px;font-size:13px;line-height:13px;font-weight:400;color:#d8d8d8;white-space:nowrap;left:1280.11px;width:39.73px;text-align:center;transform:scaleX(0.78);">AM</div>
<div style="left:1309.34px;top:206px;width:1px;height:17px;background:#4a4a50"></div>
<div style="top:208.5px;font-size:13px;line-height:13px;font-weight:400;color:#d8d8d8;white-space:nowrap;left:1299.84px;width:39.73px;text-align:center;transform:scaleX(0.78);">AN</div>
<div style="left:1329.06px;top:206px;width:1px;height:17px;background:#4a4a50"></div>
<div style="top:208.5px;font-size:13px;line-height:13px;font-weight:400;color:#d8d8d8;white-space:nowrap;left:1319.56px;width:39.73px;text-align:center;transform:scaleX(0.78);">AO</div>
<div style="left:1348.79px;top:206px;width:1px;height:17px;background:#4a4a50"></div>
<div style="top:208.5px;font-size:13px;line-height:13px;font-weight:400;color:#d8d8d8;white-space:nowrap;left:1339.29px;width:39.73px;text-align:center;transform:scaleX(0.78);">AP</div>
<div style="left:1368.52px;top:206px;width:1px;height:17px;background:#4a4a50"></div>
<div style="top:208.5px;font-size:13px;line-height:13px;font-weight:400;color:#d8d8d8;white-space:nowrap;left:1359.02px;width:39.73px;text-align:center;transform:scaleX(0.78);">AQ</div>
<div style="left:1388.24px;top:206px;width:1px;height:17px;background:#4a4a50"></div>
<div style="top:208.5px;font-size:13px;line-height:13px;font-weight:400;color:#d8d8d8;white-space:nowrap;left:1378.74px;width:39.73px;text-align:center;transform:scaleX(0.78);">AR</div>
<div style="left:1407.97px;top:206px;width:1px;height:17px;background:#4a4a50"></div>
<div style="top:208.5px;font-size:13px;line-height:13px;font-weight:400;color:#d8d8d8;white-space:nowrap;left:1398.47px;width:39.73px;text-align:center;transform:scaleX(0.78);">AS</div>
<div style="left:1427.7px;top:206px;width:1px;height:17px;background:#4a4a50"></div>
<div style="top:208.5px;font-size:13px;line-height:13px;font-weight:400;color:#d8d8d8;white-space:nowrap;left:1418.2px;width:39.73px;text-align:center;transform:scaleX(0.78);">AT</div>
<div style="left:1447.43px;top:206px;width:1px;height:17px;background:#4a4a50"></div>
<div style="top:208.5px;font-size:13px;line-height:13px;font-weight:400;color:#d8d8d8;white-space:nowrap;left:1437.93px;width:39.73px;text-align:center;transform:scaleX(0.78);">AU</div>
<div style="left:1467.15px;top:206px;width:1px;height:17px;background:#4a4a50"></div>
<div style="top:208.5px;font-size:13px;line-height:13px;font-weight:400;color:#d8d8d8;white-space:nowrap;left:1457.65px;width:39.73px;text-align:center;transform:scaleX(0.78);">AV</div>
<div style="left:1486.88px;top:206px;width:1px;height:17px;background:#4a4a50"></div>
<div style="top:208.5px;font-size:13px;line-height:13px;font-weight:400;color:#d8d8d8;white-space:nowrap;left:1477.38px;width:39.73px;text-align:center;transform:scaleX(0.78);">AW</div>
<div style="left:1506.61px;top:206px;width:1px;height:17px;background:#4a4a50"></div>
<div style="top:208.5px;font-size:13px;line-height:13px;font-weight:400;color:#d8d8d8;white-space:nowrap;left:1497.11px;width:39.73px;text-align:center;transform:scaleX(0.78);">AX</div>
<div style="left:1526.33px;top:206px;width:1px;height:17px;background:#4a4a50"></div>
<div style="top:208.5px;font-size:13px;line-height:13px;font-weight:400;color:#d8d8d8;white-space:nowrap;left:1516.83px;width:39.73px;text-align:center;transform:scaleX(0.78);">AY</div>
<div style="left:1546.06px;top:206px;width:1px;height:17px;background:#4a4a50"></div>
<div style="top:208.5px;font-size:13px;line-height:13px;font-weight:400;color:#d8d8d8;white-space:nowrap;left:1536.56px;width:39.73px;text-align:center;transform:scaleX(0.78);">AZ</div>
<div style="left:1565.79px;top:206px;width:1px;height:17px;background:#4a4a50"></div>
<div style="top:208.5px;font-size:13px;line-height:13px;font-weight:400;color:#d8d8d8;white-space:nowrap;left:1556.29px;width:39.73px;text-align:center;transform:scaleX(0.78);">BA</div>
<div style="left:1585.51px;top:206px;width:1px;height:17px;background:#4a4a50"></div>
<div style="top:208.5px;font-size:13px;line-height:13px;font-weight:400;color:#d8d8d8;white-space:nowrap;left:1576.01px;width:39.73px;text-align:center;transform:scaleX(0.78);">BB</div>
<div style="left:1605.24px;top:206px;width:1px;height:17px;background:#4a4a50"></div>
<div style="top:208.5px;font-size:13px;line-height:13px;font-weight:400;color:#d8d8d8;white-space:nowrap;left:1595.74px;width:39.73px;text-align:center;transform:scaleX(0.78);">BC</div>
<div style="left:1624.97px;top:206px;width:1px;height:17px;background:#4a4a50"></div>
<div style="top:208.5px;font-size:13px;line-height:13px;font-weight:400;color:#d8d8d8;white-space:nowrap;left:1615.47px;width:39.73px;text-align:center;transform:scaleX(0.78);">BD</div>
<div style="left:1644.7px;top:206px;width:1px;height:17px;background:#4a4a50"></div>
<div style="top:208.5px;font-size:13px;line-height:13px;font-weight:400;color:#d8d8d8;white-space:nowrap;left:1635.2px;width:39.73px;text-align:center;transform:scaleX(0.78);">BE</div>
<div style="left:1664.42px;top:206px;width:1px;height:17px;background:#4a4a50"></div>
<div style="top:208.5px;font-size:13px;line-height:13px;font-weight:400;color:#d8d8d8;white-space:nowrap;left:1654.92px;width:39.73px;text-align:center;transform:scaleX(0.78);">BF</div>
<div style="left:1684.15px;top:206px;width:1px;height:17px;background:#4a4a50"></div>
<div style="top:208.5px;font-size:13px;line-height:13px;font-weight:400;color:#d8d8d8;white-space:nowrap;left:1674.65px;width:39.73px;text-align:center;transform:scaleX(0.78);">BG</div>
<div style="left:1703.88px;top:206px;width:1px;height:17px;background:#4a4a50"></div>
<div style="top:208.5px;font-size:13px;line-height:13px;font-weight:400;color:#d8d8d8;white-space:nowrap;left:1694.38px;width:39.73px;text-align:center;transform:scaleX(0.78);">BH</div>
<div style="left:1723.6px;top:206px;width:1px;height:17px;background:#4a4a50"></div>
<div style="top:208.5px;font-size:13px;line-height:13px;font-weight:400;color:#d8d8d8;white-space:nowrap;left:1714.1px;width:39.73px;text-align:center;transform:scaleX(0.78);">BI</div>
<div style="left:1743.33px;top:206px;width:1px;height:17px;background:#4a4a50"></div>
<div style="top:208.5px;font-size:13px;line-height:13px;font-weight:400;color:#d8d8d8;white-space:nowrap;left:1733.83px;width:39.73px;text-align:center;transform:scaleX(0.78);">BJ</div>
<div style="left:1763.06px;top:206px;width:1px;height:17px;background:#4a4a50"></div>
<div style="top:208.5px;font-size:13px;line-height:13px;font-weight:400;color:#d8d8d8;white-space:nowrap;left:1753.56px;width:39.73px;text-align:center;transform:scaleX(0.78);">BK</div>
<div style="left:1782.79px;top:206px;width:1px;height:17px;background:#4a4a50"></div>
<div style="top:208.5px;font-size:13px;line-height:13px;font-weight:400;color:#d8d8d8;white-space:nowrap;left:1773.29px;width:39.73px;text-align:center;transform:scaleX(0.78);">BL</div>
<div style="left:1802.51px;top:206px;width:1px;height:17px;background:#4a4a50"></div>
<div style="top:208.5px;font-size:13px;line-height:13px;font-weight:400;color:#d8d8d8;white-space:nowrap;left:1793.01px;width:39.73px;text-align:center;transform:scaleX(0.78);">BM</div>
<div style="left:1822.24px;top:206px;width:1px;height:17px;background:#4a4a50"></div>
<div style="top:208.5px;font-size:13px;line-height:13px;font-weight:400;color:#d8d8d8;white-space:nowrap;left:1812.74px;width:39.73px;text-align:center;transform:scaleX(0.78);">BN</div>
<div style="left:1841.97px;top:206px;width:1px;height:17px;background:#4a4a50"></div>
<div style="top:208.5px;font-size:13px;line-height:13px;font-weight:400;color:#d8d8d8;white-space:nowrap;left:1832.47px;width:39.73px;text-align:center;transform:scaleX(0.78);">BO</div>
<div style="left:1861.69px;top:206px;width:1px;height:17px;background:#4a4a50"></div>
<div style="top:208.5px;font-size:13px;line-height:13px;font-weight:400;color:#d8d8d8;white-space:nowrap;left:1852.19px;width:39.73px;text-align:center;transform:scaleX(0.78);">BP</div>
<div style="left:1881.42px;top:206px;width:1px;height:17px;background:#4a4a50"></div>
<div style="top:208.5px;font-size:13px;line-height:13px;font-weight:400;color:#d8d8d8;white-space:nowrap;left:1871.92px;width:39.73px;text-align:center;transform:scaleX(0.78);">BQ</div>
<div style="left:1901.15px;top:206px;width:1px;height:17px;background:#4a4a50"></div>
<div style="top:208.5px;font-size:13px;line-height:13px;font-weight:400;color:#d8d8d8;white-space:nowrap;left:1891.65px;width:39.73px;text-align:center;transform:scaleX(0.78);">BR</div>
<div style="left:1920.87px;top:206px;width:1px;height:17px;background:#4a4a50"></div>
<div style="top:208.5px;font-size:13px;line-height:13px;font-weight:400;color:#d8d8d8;white-space:nowrap;left:1911.37px;width:39.73px;text-align:center;transform:scaleX(0.78);">BS</div>
<div style="left:0px;top:223.2px;width:21.5px;height:1px;background:#3a3a3e"></div>
<div style="top:228.2px;font-size:13px;line-height:13px;font-weight:400;color:#e0e0e0;white-space:nowrap;left:-5.8px;width:30px;text-align:center;transform:scaleX(0.92);">1</div>
<div style="left:0px;top:242.92px;width:21.5px;height:1px;background:#3a3a3e"></div>
<div style="top:247.92px;font-size:13px;line-height:13px;font-weight:400;color:#e0e0e0;white-space:nowrap;left:-5.8px;width:30px;text-align:center;transform:scaleX(0.92);">2</div>
<div style="left:0px;top:262.64px;width:21.5px;height:1px;background:#3a3a3e"></div>
<div style="top:267.64px;font-size:13px;line-height:13px;font-weight:400;color:#e0e0e0;white-space:nowrap;left:-5.8px;width:30px;text-align:center;transform:scaleX(0.92);">3</div>
<div style="left:0px;top:282.36px;width:21.5px;height:1px;background:#3a3a3e"></div>
<div style="top:287.36px;font-size:13px;line-height:13px;font-weight:400;color:#e0e0e0;white-space:nowrap;left:-5.8px;width:30px;text-align:center;transform:scaleX(0.92);">4</div>
<div style="left:0px;top:302.08px;width:21.5px;height:1px;background:#3a3a3e"></div>
<div style="top:307.08px;font-size:13px;line-height:13px;font-weight:400;color:#e0e0e0;white-space:nowrap;left:-5.8px;width:30px;text-align:center;transform:scaleX(0.92);">5</div>
<div style="left:0px;top:321.8px;width:21.5px;height:1px;background:#3a3a3e"></div>
<div style="top:326.8px;font-size:13px;line-height:13px;font-weight:400;color:#e0e0e0;white-space:nowrap;left:-5.8px;width:30px;text-align:center;transform:scaleX(0.92);">6</div>
<div style="left:0px;top:341.52px;width:21.5px;height:1px;background:#3a3a3e"></div>
<div style="top:346.52px;font-size:13px;line-height:13px;font-weight:400;color:#e0e0e0;white-space:nowrap;left:-5.8px;width:30px;text-align:center;transform:scaleX(0.92);">7</div>
<div style="left:0px;top:361.24px;width:21.5px;height:1px;background:#3a3a3e"></div>
<div style="top:366.24px;font-size:13px;line-height:13px;font-weight:400;color:#e0e0e0;white-space:nowrap;left:-5.8px;width:30px;text-align:center;transform:scaleX(0.92);">8</div>
<div style="left:0px;top:380.96px;width:21.5px;height:1px;background:#3a3a3e"></div>
<div style="top:385.96px;font-size:13px;line-height:13px;font-weight:400;color:#e0e0e0;white-space:nowrap;left:-5.8px;width:30px;text-align:center;transform:scaleX(0.92);">9</div>
<div style="left:0px;top:400.68px;width:21.5px;height:1px;background:#3a3a3e"></div>
<div style="top:405.68px;font-size:13px;line-height:13px;font-weight:400;color:#e0e0e0;white-space:nowrap;left:-5.8px;width:30px;text-align:center;transform:scaleX(0.92);">10</div>
<div style="left:0px;top:420.4px;width:21.5px;height:1px;background:#3a3a3e"></div>
<div style="top:425.4px;font-size:13px;line-height:13px;font-weight:400;color:#e0e0e0;white-space:nowrap;left:-5.8px;width:30px;text-align:center;transform:scaleX(0.92);">11</div>
<div style="left:0px;top:440.12px;width:21.5px;height:1px;background:#3a3a3e"></div>
<div style="top:445.12px;font-size:13px;line-height:13px;font-weight:400;color:#e0e0e0;white-space:nowrap;left:-5.8px;width:30px;text-align:center;transform:scaleX(0.92);">12</div>
<div style="left:0px;top:459.84px;width:21.5px;height:1px;background:#3a3a3e"></div>
<div style="top:464.84px;font-size:13px;line-height:13px;font-weight:400;color:#e0e0e0;white-space:nowrap;left:-5.8px;width:30px;text-align:center;transform:scaleX(0.92);">13</div>
<div style="left:0px;top:479.56px;width:21.5px;height:1px;background:#3a3a3e"></div>
<div style="top:484.56px;font-size:13px;line-height:13px;font-weight:400;color:#e0e0e0;white-space:nowrap;left:-5.8px;width:30px;text-align:center;transform:scaleX(0.92);">14</div>
<div style="left:0px;top:499.28px;width:21.5px;height:1px;background:#3a3a3e"></div>
<div style="top:504.28px;font-size:13px;line-height:13px;font-weight:400;color:#e0e0e0;white-space:nowrap;left:-5.8px;width:30px;text-align:center;transform:scaleX(0.92);">15</div>
<div style="left:0px;top:519px;width:21.5px;height:1px;background:#3a3a3e"></div>
<div style="top:524px;font-size:13px;line-height:13px;font-weight:400;color:#e0e0e0;white-space:nowrap;left:-5.8px;width:30px;text-align:center;transform:scaleX(0.92);">16</div>
<div style="left:0px;top:538.72px;width:21.5px;height:1px;background:#3a3a3e"></div>
<div style="top:543.72px;font-size:13px;line-height:13px;font-weight:400;color:#e0e0e0;white-space:nowrap;left:-5.8px;width:30px;text-align:center;transform:scaleX(0.92);">17</div>
<div style="left:0px;top:558.44px;width:21.5px;height:1px;background:#3a3a3e"></div>
<div style="top:563.44px;font-size:13px;line-height:13px;font-weight:400;color:#e0e0e0;white-space:nowrap;left:-5.8px;width:30px;text-align:center;transform:scaleX(0.92);">18</div>
<div style="left:0px;top:578.16px;width:21.5px;height:1px;background:#3a3a3e"></div>
<div style="top:583.16px;font-size:13px;line-height:13px;font-weight:400;color:#e0e0e0;white-space:nowrap;left:-5.8px;width:30px;text-align:center;transform:scaleX(0.92);">19</div>
<div style="left:0px;top:597.88px;width:21.5px;height:1px;background:#3a3a3e"></div>
<div style="top:602.88px;font-size:13px;line-height:13px;font-weight:400;color:#e0e0e0;white-space:nowrap;left:-5.8px;width:30px;text-align:center;transform:scaleX(0.92);">20</div>
<div style="left:0px;top:617.6px;width:21.5px;height:1px;background:#3a3a3e"></div>
<div style="top:622.6px;font-size:13px;line-height:13px;font-weight:400;color:#e0e0e0;white-space:nowrap;left:-5.8px;width:30px;text-align:center;transform:scaleX(0.92);">21</div>
<div style="left:0px;top:637.32px;width:21.5px;height:1px;background:#3a3a3e"></div>
<div style="top:642.32px;font-size:13px;line-height:13px;font-weight:400;color:#e0e0e0;white-space:nowrap;left:-5.8px;width:30px;text-align:center;transform:scaleX(0.92);">22</div>
<div style="left:0px;top:657.04px;width:21.5px;height:1px;background:#3a3a3e"></div>
<div style="top:662.04px;font-size:13px;line-height:13px;font-weight:400;color:#e0e0e0;white-space:nowrap;left:-5.8px;width:30px;text-align:center;transform:scaleX(0.92);">23</div>
<div style="left:0px;top:676.76px;width:21.5px;height:1px;background:#3a3a3e"></div>
<div style="top:681.76px;font-size:13px;line-height:13px;font-weight:400;color:#e0e0e0;white-space:nowrap;left:-5.8px;width:30px;text-align:center;transform:scaleX(0.92);">24</div>
<div style="left:0px;top:696.48px;width:21.5px;height:1px;background:#3a3a3e"></div>
<div style="top:701.48px;font-size:13px;line-height:13px;font-weight:400;color:#e0e0e0;white-space:nowrap;left:-5.8px;width:30px;text-align:center;transform:scaleX(0.92);">25</div>
<div style="left:0px;top:716.2px;width:21.5px;height:1px;background:#3a3a3e"></div>
<div style="top:721.2px;font-size:13px;line-height:13px;font-weight:400;color:#e0e0e0;white-space:nowrap;left:-5.8px;width:30px;text-align:center;transform:scaleX(0.92);">26</div>
<div style="left:0px;top:735.92px;width:21.5px;height:1px;background:#3a3a3e"></div>
<div style="top:740.92px;font-size:13px;line-height:13px;font-weight:400;color:#e0e0e0;white-space:nowrap;left:-5.8px;width:30px;text-align:center;transform:scaleX(0.92);">27</div>
<div style="left:0px;top:755.64px;width:21.5px;height:1px;background:#3a3a3e"></div>
<div style="top:760.64px;font-size:13px;line-height:13px;font-weight:400;color:#e0e0e0;white-space:nowrap;left:-5.8px;width:30px;text-align:center;transform:scaleX(0.92);">28</div>
<div style="left:0px;top:775.36px;width:21.5px;height:1px;background:#3a3a3e"></div>
<div style="top:780.36px;font-size:13px;line-height:13px;font-weight:400;color:#e0e0e0;white-space:nowrap;left:-5.8px;width:30px;text-align:center;transform:scaleX(0.92);">29</div>
<div style="left:0px;top:795.08px;width:21.5px;height:1px;background:#3a3a3e"></div>
<div style="top:800.08px;font-size:13px;line-height:13px;font-weight:400;color:#e0e0e0;white-space:nowrap;left:-5.8px;width:30px;text-align:center;transform:scaleX(0.92);">30</div>
<div style="left:0px;top:814.8px;width:21.5px;height:1px;background:#3a3a3e"></div>
<div style="top:819.8px;font-size:13px;line-height:13px;font-weight:400;color:#e0e0e0;white-space:nowrap;left:-5.8px;width:30px;text-align:center;transform:scaleX(0.92);">31</div>
<div style="left:0px;top:834.52px;width:21.5px;height:1px;background:#3a3a3e"></div>
<div style="top:839.52px;font-size:13px;line-height:13px;font-weight:400;color:#e0e0e0;white-space:nowrap;left:-5.8px;width:30px;text-align:center;transform:scaleX(0.92);">32</div>
<div style="left:0px;top:854.24px;width:21.5px;height:1px;background:#3a3a3e"></div>
<div style="top:859.24px;font-size:13px;line-height:13px;font-weight:400;color:#e0e0e0;white-space:nowrap;left:-5.8px;width:30px;text-align:center;transform:scaleX(0.92);">33</div>
<div style="left:0px;top:873.96px;width:21.5px;height:1px;background:#3a3a3e"></div>
<div style="top:878.96px;font-size:13px;line-height:13px;font-weight:400;color:#e0e0e0;white-space:nowrap;left:-5.8px;width:30px;text-align:center;transform:scaleX(0.92);">34</div>
<div style="left:0px;top:893.68px;width:21.5px;height:1px;background:#3a3a3e"></div>
<div style="top:898.68px;font-size:13px;line-height:13px;font-weight:400;color:#e0e0e0;white-space:nowrap;left:-5.8px;width:30px;text-align:center;transform:scaleX(0.92);">35</div>
<div style="left:0px;top:913.4px;width:21.5px;height:1px;background:#3a3a3e"></div>
<div style="top:918.4px;font-size:13px;line-height:13px;font-weight:400;color:#e0e0e0;white-space:nowrap;left:-5.8px;width:30px;text-align:center;transform:scaleX(0.92);">36</div>
<div style="left:0px;top:933.12px;width:21.5px;height:1px;background:#3a3a3e"></div>
<div style="left:0px;top:933.62px;width:21.5px;height:19.72px;background:#6a6a6e"></div>
<div style="left:20px;top:933.62px;width:1.5px;height:19.72px;background:#3d8a5a"></div>
<div style="top:938.12px;font-size:13px;line-height:13px;font-weight:400;color:#e0e0e0;white-space:nowrap;left:-5.8px;width:30px;text-align:center;transform:scaleX(0.92);">37</div>
<div style="left:0px;top:952.84px;width:21.5px;height:1px;background:#3a3a3e"></div>
<div style="top:957.84px;font-size:13px;line-height:13px;font-weight:400;color:#e0e0e0;white-space:nowrap;left:-5.8px;width:30px;text-align:center;transform:scaleX(0.92);">38</div>
<div style="left:0px;top:972.56px;width:21.5px;height:1px;background:#3a3a3e"></div>
<div style="top:977.56px;font-size:13px;line-height:13px;font-weight:400;color:#e0e0e0;white-space:nowrap;left:-5.8px;width:30px;text-align:center;transform:scaleX(0.92);">39</div>
<div style="left:0px;top:992.28px;width:21.5px;height:1px;background:#3a3a3e"></div>
<div style="top:997.28px;font-size:13px;line-height:13px;font-weight:400;color:#e0e0e0;white-space:nowrap;left:-5.8px;width:30px;text-align:center;transform:scaleX(0.92);">40</div>
<div style="left:0px;top:1012px;width:21.5px;height:1px;background:#3a3a3e"></div>
<div style="top:1017px;font-size:13px;line-height:13px;font-weight:400;color:#e0e0e0;white-space:nowrap;left:-5.8px;width:30px;text-align:center;transform:scaleX(0.92);">41</div>
<div style="left:0px;top:1031.72px;width:21.5px;height:1px;background:#3a3a3e"></div>
<div style="top:1036.72px;font-size:13px;line-height:13px;font-weight:400;color:#e0e0e0;white-space:nowrap;left:-5.8px;width:30px;text-align:center;transform:scaleX(0.92);">42</div>
<div style="left:0px;top:1051.44px;width:21.5px;height:1px;background:#3a3a3e"></div>
<div style="top:1056.44px;font-size:13px;line-height:13px;font-weight:400;color:#e0e0e0;white-space:nowrap;left:-5.8px;width:30px;text-align:center;transform:scaleX(0.92);">43</div>
<div style="left:0px;top:1071.16px;width:21.5px;height:1px;background:#3a3a3e"></div>
<div style="top:1076.16px;font-size:13px;line-height:13px;font-weight:400;color:#e0e0e0;white-space:nowrap;left:-5.8px;width:30px;text-align:center;transform:scaleX(0.92);">44</div>
<div style="left:213px;top:223.7px;width:1px;height:860px;background:#d9d9e2"></div>
<div style="left:311px;top:223.7px;width:1px;height:860px;background:#d9d9e2"></div>
<div style="left:359px;top:223.7px;width:1px;height:860px;background:#d9d9e2"></div>
<div style="left:426px;top:223.7px;width:1px;height:860px;background:#d9d9e2"></div>
<div style="left:493px;top:223.7px;width:1px;height:860px;background:#d9d9e2"></div>
<div style="left:562px;top:223.7px;width:1px;height:860px;background:#d9d9e2"></div>
<div style="left:630px;top:223.7px;width:1px;height:860px;background:#d9d9e2"></div>
<div style="left:697px;top:223.7px;width:1px;height:860px;background:#d9d9e2"></div>
<div style="left:717px;top:223.7px;width:1px;height:860px;background:#d9d9e2"></div>
<div style="left:737px;top:223.7px;width:1px;height:860px;background:#d9d9e2"></div>
<div style="left:756px;top:223.7px;width:1px;height:860px;background:#d9d9e2"></div>
<div style="left:776px;top:223.7px;width:1px;height:860px;background:#d9d9e2"></div>
<div style="left:796px;top:223.7px;width:1px;height:860px;background:#d9d9e2"></div>
<div style="left:816px;top:223.7px;width:1px;height:860px;background:#d9d9e2"></div>
<div style="left:835px;top:223.7px;width:1px;height:860px;background:#d9d9e2"></div>
<div style="left:855px;top:223.7px;width:1px;height:860px;background:#d9d9e2"></div>
<div style="left:875px;top:223.7px;width:1px;height:860px;background:#d9d9e2"></div>
<div style="left:895px;top:223.7px;width:1px;height:860px;background:#d9d9e2"></div>
<div style="left:914px;top:223.7px;width:1px;height:860px;background:#d9d9e2"></div>
<div style="left:934px;top:223.7px;width:1px;height:860px;background:#d9d9e2"></div>
<div style="left:954px;top:223.7px;width:1px;height:860px;background:#d9d9e2"></div>
<div style="left:973px;top:223.7px;width:1px;height:860px;background:#d9d9e2"></div>
<div style="left:993px;top:223.7px;width:1px;height:860px;background:#d9d9e2"></div>
<div style="left:1013px;top:223.7px;width:1px;height:860px;background:#d9d9e2"></div>
<div style="left:1033px;top:223.7px;width:1px;height:860px;background:#d9d9e2"></div>
<div style="left:1052px;top:223.7px;width:1px;height:860px;background:#d9d9e2"></div>
<div style="left:1072px;top:223.7px;width:1px;height:860px;background:#d9d9e2"></div>
<div style="left:1092px;top:223.7px;width:1px;height:860px;background:#d9d9e2"></div>
<div style="left:1112px;top:223.7px;width:1px;height:860px;background:#d9d9e2"></div>
<div style="left:1131px;top:223.7px;width:1px;height:860px;background:#d9d9e2"></div>
<div style="left:1151px;top:223.7px;width:1px;height:860px;background:#d9d9e2"></div>
<div style="left:1171px;top:223.7px;width:1px;height:860px;background:#d9d9e2"></div>
<div style="left:1190px;top:223.7px;width:1px;height:860px;background:#d9d9e2"></div>
<div style="left:1210px;top:223.7px;width:1px;height:860px;background:#d9d9e2"></div>
<div style="left:1230px;top:223.7px;width:1px;height:860px;background:#d9d9e2"></div>
<div style="left:1250px;top:223.7px;width:1px;height:860px;background:#d9d9e2"></div>
<div style="left:1269px;top:223.7px;width:1px;height:860px;background:#d9d9e2"></div>
<div style="left:1289px;top:223.7px;width:1px;height:860px;background:#d9d9e2"></div>
<div style="left:1309px;top:223.7px;width:1px;height:860px;background:#d9d9e2"></div>
<div style="left:1329px;top:223.7px;width:1px;height:860px;background:#d9d9e2"></div>
<div style="left:1348px;top:223.7px;width:1px;height:860px;background:#d9d9e2"></div>
<div style="left:1368px;top:223.7px;width:1px;height:860px;background:#d9d9e2"></div>
<div style="left:1388px;top:223.7px;width:1px;height:860px;background:#d9d9e2"></div>
<div style="left:1407px;top:223.7px;width:1px;height:860px;background:#d9d9e2"></div>
<div style="left:1427px;top:223.7px;width:1px;height:860px;background:#d9d9e2"></div>
<div style="left:1447px;top:223.7px;width:1px;height:860px;background:#d9d9e2"></div>
<div style="left:1467px;top:223.7px;width:1px;height:860px;background:#d9d9e2"></div>
<div style="left:1486px;top:223.7px;width:1px;height:860px;background:#d9d9e2"></div>
<div style="left:1506px;top:223.7px;width:1px;height:860px;background:#d9d9e2"></div>
<div style="left:1526px;top:223.7px;width:1px;height:860px;background:#d9d9e2"></div>
<div style="left:1546px;top:223.7px;width:1px;height:860px;background:#d9d9e2"></div>
<div style="left:1565px;top:223.7px;width:1px;height:860px;background:#d9d9e2"></div>
<div style="left:1585px;top:223.7px;width:1px;height:860px;background:#d9d9e2"></div>
<div style="left:1605px;top:223.7px;width:1px;height:860px;background:#d9d9e2"></div>
<div style="left:1624px;top:223.7px;width:1px;height:860px;background:#d9d9e2"></div>
<div style="left:1644px;top:223.7px;width:1px;height:860px;background:#d9d9e2"></div>
<div style="left:1664px;top:223.7px;width:1px;height:860px;background:#d9d9e2"></div>
<div style="left:1684px;top:223.7px;width:1px;height:860px;background:#d9d9e2"></div>
<div style="left:1703px;top:223.7px;width:1px;height:860px;background:#d9d9e2"></div>
<div style="left:1723px;top:223.7px;width:1px;height:860px;background:#d9d9e2"></div>
<div style="left:1743px;top:223.7px;width:1px;height:860px;background:#d9d9e2"></div>
<div style="left:1763px;top:223.7px;width:1px;height:860px;background:#d9d9e2"></div>
<div style="left:1782px;top:223.7px;width:1px;height:860px;background:#d9d9e2"></div>
<div style="left:1802px;top:223.7px;width:1px;height:860px;background:#d9d9e2"></div>
<div style="left:1822px;top:223.7px;width:1px;height:860px;background:#d9d9e2"></div>
<div style="left:1841px;top:223.7px;width:1px;height:860px;background:#d9d9e2"></div>
<div style="left:1861px;top:223.7px;width:1px;height:860px;background:#d9d9e2"></div>
<div style="left:1881px;top:223.7px;width:1px;height:860px;background:#d9d9e2"></div>
<div style="left:1901px;top:223.7px;width:1px;height:860px;background:#d9d9e2"></div>
<div style="left:1920px;top:223.7px;width:1px;height:860px;background:#d9d9e2"></div>
<div style="left:21.5px;top:243px;width:1900px;height:1px;background:#d9d9e2"></div>
<div style="left:21.5px;top:263px;width:1900px;height:1px;background:#d9d9e2"></div>
<div style="left:21.5px;top:282px;width:1900px;height:1px;background:#d9d9e2"></div>
<div style="left:21.5px;top:302px;width:1900px;height:1px;background:#d9d9e2"></div>
<div style="left:21.5px;top:322px;width:1900px;height:1px;background:#d9d9e2"></div>
<div style="left:21.5px;top:342px;width:1900px;height:1px;background:#d9d9e2"></div>
<div style="left:21.5px;top:361px;width:1900px;height:1px;background:#d9d9e2"></div>
<div style="left:21.5px;top:381px;width:1900px;height:1px;background:#d9d9e2"></div>
<div style="left:21.5px;top:401px;width:1900px;height:1px;background:#d9d9e2"></div>
<div style="left:21.5px;top:420px;width:1900px;height:1px;background:#d9d9e2"></div>
<div style="left:21.5px;top:440px;width:1900px;height:1px;background:#d9d9e2"></div>
<div style="left:21.5px;top:460px;width:1900px;height:1px;background:#d9d9e2"></div>
<div style="left:21.5px;top:480px;width:1900px;height:1px;background:#d9d9e2"></div>
<div style="left:21.5px;top:499px;width:1900px;height:1px;background:#d9d9e2"></div>
<div style="left:21.5px;top:519px;width:1900px;height:1px;background:#d9d9e2"></div>
<div style="left:21.5px;top:539px;width:1900px;height:1px;background:#d9d9e2"></div>
<div style="left:21.5px;top:558px;width:1900px;height:1px;background:#d9d9e2"></div>
<div style="left:21.5px;top:578px;width:1900px;height:1px;background:#d9d9e2"></div>
<div style="left:21.5px;top:598px;width:1900px;height:1px;background:#d9d9e2"></div>
<div style="left:21.5px;top:618px;width:1900px;height:1px;background:#d9d9e2"></div>
<div style="left:21.5px;top:637px;width:1900px;height:1px;background:#d9d9e2"></div>
<div style="left:21.5px;top:657px;width:1900px;height:1px;background:#d9d9e2"></div>
<div style="left:21.5px;top:677px;width:1900px;height:1px;background:#d9d9e2"></div>
<div style="left:21.5px;top:696px;width:1900px;height:1px;background:#d9d9e2"></div>
<div style="left:21.5px;top:716px;width:1900px;height:1px;background:#d9d9e2"></div>
<div style="left:21.5px;top:736px;width:1900px;height:1px;background:#d9d9e2"></div>
<div style="left:21.5px;top:756px;width:1900px;height:1px;background:#d9d9e2"></div>
<div style="left:21.5px;top:775px;width:1900px;height:1px;background:#d9d9e2"></div>
<div style="left:21.5px;top:795px;width:1900px;height:1px;background:#d9d9e2"></div>
<div style="left:21.5px;top:815px;width:1900px;height:1px;background:#d9d9e2"></div>
<div style="left:21.5px;top:835px;width:1900px;height:1px;background:#d9d9e2"></div>
<div style="left:21.5px;top:854px;width:1900px;height:1px;background:#d9d9e2"></div>
<div style="left:21.5px;top:874px;width:1900px;height:1px;background:#d9d9e2"></div>
<div style="left:21.5px;top:894px;width:1900px;height:1px;background:#d9d9e2"></div>
<div style="left:21.5px;top:913px;width:1900px;height:1px;background:#d9d9e2"></div>
<div style="left:21.5px;top:933px;width:1900px;height:1px;background:#d9d9e2"></div>
<div style="left:21.5px;top:953px;width:1900px;height:1px;background:#d9d9e2"></div>
<div style="left:21.5px;top:973px;width:1900px;height:1px;background:#d9d9e2"></div>
<div style="left:21.5px;top:992px;width:1900px;height:1px;background:#d9d9e2"></div>
<div style="left:21.5px;top:1012px;width:1900px;height:1px;background:#d9d9e2"></div>
<div style="left:21.5px;top:1032px;width:1900px;height:1px;background:#d9d9e2"></div>
<div style="left:21.5px;top:1051px;width:1900px;height:1px;background:#d9d9e2"></div>
<div style="left:21.5px;top:1071px;width:1900px;height:1px;background:#d9d9e2"></div>
<div style="left:21.5px;top:1091px;width:1900px;height:1px;background:#d9d9e2"></div>
<div style="left:22px;top:223.7px;width:608.6px;height:39.44px;background:#4bacc6"></div>
<div style="left:21.5px;top:262.04px;width:610.1px;height:2.2px;background:#000"></div>
<div style="left:492.8px;top:223.7px;width:2.2px;height:39.44px;background:#000"></div>
<div style="left:629.5px;top:223.7px;width:2.2px;height:40.44px;background:#000"></div>
<div style="top:232.68px;font-size:24px;line-height:24px;font-weight:700;color:#0a0a0a;white-space:nowrap;letter-spacing:0.1px;left:30px;">Screw press foundationload calculation</div>
<div style="top:232.68px;font-size:24px;line-height:24px;font-weight:700;color:#0a0a0a;white-space:nowrap;left:497px;width:130px;text-align:center;transform:scaleX(0.92);">SCP755</div>
<div style="left:21.5px;top:281.66px;width:338.6px;height:2.4px;background:#000"></div>
<div style="left:21.5px;top:321.1px;width:338.6px;height:2.4px;background:#000"></div>
<div style="left:21.4px;top:282.86px;width:1.4px;height:39.44px;background:#000"></div>
<div style="left:357.9px;top:281.86px;width:2.4px;height:41.44px;background:#000"></div>
<div style="left:22.5px;top:282.86px;width:336.6px;height:19.72px;background:#d9d9d9"></div>
<div style="top:287.9px;font-size:12px;line-height:12px;font-weight:700;color:#000;white-space:nowrap;letter-spacing:-0.2px;left:40.3px;width:300px;text-align:center;">FIELD NAME</div>
<div style="left:21.5px;top:301.38px;width:337.6px;height:2.4px;background:#000"></div>
<div style="left:212.8px;top:302.58px;width:2.2px;height:19.72px;background:#000"></div>
<div style="left:309.9px;top:302.58px;width:2.2px;height:19.72px;background:#000"></div>
<div style="top:307.62px;font-size:12px;line-height:12px;font-weight:700;color:#000;white-space:nowrap;left:17.7px;width:200px;text-align:center;">selection</div>
<div style="top:307.62px;font-size:12px;line-height:12px;font-weight:700;color:#000;white-space:nowrap;left:162.45px;width:200px;text-align:center;">value</div>
<div style="top:307.62px;font-size:12px;line-height:12px;font-weight:700;color:#000;white-space:nowrap;left:235.05px;width:200px;text-align:center;">unit</div>
<div style="left:21.5px;top:340.82px;width:338.6px;height:2.4px;background:#000"></div>
<div style="left:21.5px;top:419.7px;width:338.6px;height:2.4px;background:#000"></div>
<div style="left:21.4px;top:342.02px;width:1.4px;height:78.88px;background:#000"></div>
<div style="left:357.9px;top:341.02px;width:2.4px;height:80.88px;background:#000"></div>
<div style="left:22.5px;top:342.02px;width:336.6px;height:19.72px;background:#d9d9d9"></div>
<div style="top:347.06px;font-size:12px;line-height:12px;font-weight:700;color:#000;white-space:nowrap;letter-spacing:-0.2px;left:40.3px;width:300px;text-align:center;">SCREW PRESS</div>
<div style="left:21.5px;top:360.54px;width:337.6px;height:2.4px;background:#000"></div>
<div style="top:365.66px;font-size:13px;line-height:13px;font-weight:400;color:#111;white-space:nowrap;letter-spacing:0.55px;left:24.7px;">Screw press size:</div>
<div style="top:366.73px;font-size:11.5px;line-height:11.5px;font-weight:400;color:#111;white-space:nowrap;left:218.9px;">SCP755</div>
<svg style="left:293px;top:361.74px" width="18" height="20"><rect x="0.5" y="0.5" width="16" height="18" fill="#f4f4f4"/><path d="M16.5 0 v19.5 M1 18.7 h16" stroke="#333" stroke-width="2"/><path d="M4.5 7.5 h8 l-4 4.5 z" fill="#000"/></svg>
<div style="left:213.7px;top:361.74px;width:1.2px;height:19.72px;background:#222"></div>
<div style="left:309.9px;top:361.74px;width:1.2px;height:19.72px;background:#222"></div>
<div style="top:385.38px;font-size:13px;line-height:13px;font-weight:400;color:#111;white-space:nowrap;letter-spacing:0.55px;left:24.7px;">Screw rotation direction</div>
<div style="top:386.45px;font-size:11.5px;line-height:11.5px;font-weight:400;color:#111;white-space:nowrap;left:218.9px;">Clockwise</div>
<svg style="left:293px;top:381.46px" width="18" height="20"><rect x="0.5" y="0.5" width="16" height="18" fill="#f4f4f4"/><path d="M16.5 0 v19.5 M1 18.7 h16" stroke="#333" stroke-width="2"/><path d="M4.5 7.5 h8 l-4 4.5 z" fill="#000"/></svg>
<div style="left:21.5px;top:380.91px;width:337.6px;height:1.1px;background:#222"></div>
<div style="left:213.7px;top:381.46px;width:1.2px;height:19.72px;background:#222"></div>
<div style="left:309.9px;top:381.46px;width:1.2px;height:19.72px;background:#222"></div>
<div style="left:214.4px;top:401.18px;width:96.6px;height:19.72px;background:#ffc000"></div>
<div style="top:405.1px;font-size:13px;line-height:13px;font-weight:400;color:#111;white-space:nowrap;letter-spacing:0.55px;left:24.7px;">screw press weight</div>
<div style="top:405.1px;font-size:13px;line-height:13px;font-weight:400;color:#111;white-space:nowrap;letter-spacing:0.2px;left:217.5px;width:90px;text-align:right;">12000</div>
<div style="top:405.1px;font-size:13px;line-height:13px;font-weight:400;color:#111;white-space:nowrap;letter-spacing:0.3px;left:313.5px;">kg</div>
<div style="left:21.5px;top:400.63px;width:337.6px;height:1.1px;background:#222"></div>
<div style="left:213.7px;top:401.18px;width:1.2px;height:19.72px;background:#222"></div>
<div style="left:309.9px;top:401.18px;width:1.2px;height:19.72px;background:#222"></div>
<div style="left:21.5px;top:439.42px;width:338.6px;height:2.4px;background:#000"></div>
<div style="left:21.5px;top:538.02px;width:338.6px;height:2.4px;background:#000"></div>
<div style="left:21.4px;top:440.62px;width:1.4px;height:98.6px;background:#000"></div>
<div style="left:357.9px;top:439.62px;width:2.4px;height:100.6px;background:#000"></div>
<div style="left:22.5px;top:440.62px;width:336.6px;height:19.72px;background:#d9d9d9"></div>
<div style="top:445.66px;font-size:12px;line-height:12px;font-weight:700;color:#000;white-space:nowrap;letter-spacing:-0.2px;left:40.3px;width:300px;text-align:center;">MOTOR</div>
<div style="left:21.5px;top:459.14px;width:337.6px;height:2.4px;background:#000"></div>
<div style="left:214.4px;top:460.34px;width:96.6px;height:19.72px;background:#ffc000"></div>
<div style="top:464.26px;font-size:13px;line-height:13px;font-weight:400;color:#111;white-space:nowrap;letter-spacing:0.55px;left:24.7px;">motor weight</div>
<div style="top:464.26px;font-size:13px;line-height:13px;font-weight:400;color:#111;white-space:nowrap;letter-spacing:0.2px;left:217.5px;width:90px;text-align:right;">1000</div>
<div style="top:464.26px;font-size:13px;line-height:13px;font-weight:400;color:#111;white-space:nowrap;letter-spacing:0.3px;left:313.5px;">kg</div>
<div style="left:213.7px;top:460.34px;width:1.2px;height:19.72px;background:#222"></div>
<div style="left:309.9px;top:460.34px;width:1.2px;height:19.72px;background:#222"></div>
<div style="left:214.4px;top:480.06px;width:96.6px;height:19.72px;background:#ffc000"></div>
<div style="top:483.98px;font-size:13px;line-height:13px;font-weight:400;color:#111;white-space:nowrap;letter-spacing:0.55px;left:24.7px;">nominal motor power</div>
<div style="top:483.98px;font-size:13px;line-height:13px;font-weight:400;color:#111;white-space:nowrap;letter-spacing:0.2px;left:217.5px;width:90px;text-align:right;">150</div>
<div style="top:483.98px;font-size:13px;line-height:13px;font-weight:400;color:#111;white-space:nowrap;letter-spacing:0.3px;left:313.5px;">kW</div>
<div style="left:21.5px;top:479.51px;width:337.6px;height:1.1px;background:#222"></div>
<div style="left:213.7px;top:480.06px;width:1.2px;height:19.72px;background:#222"></div>
<div style="left:309.9px;top:480.06px;width:1.2px;height:19.72px;background:#222"></div>
<div style="left:214.4px;top:499.78px;width:96.6px;height:19.72px;background:#ffc000"></div>
<div style="top:503.7px;font-size:13px;line-height:13px;font-weight:400;color:#111;white-space:nowrap;letter-spacing:0.55px;left:24.7px;">motor speed</div>
<div style="top:503.7px;font-size:13px;line-height:13px;font-weight:400;color:#111;white-space:nowrap;letter-spacing:0.2px;left:217.5px;width:90px;text-align:right;">1500</div>
<div style="top:503.7px;font-size:13px;line-height:13px;font-weight:400;color:#111;white-space:nowrap;letter-spacing:0.3px;left:313.5px;">1/min</div>
<div style="left:21.5px;top:499.23px;width:337.6px;height:1.1px;background:#222"></div>
<div style="left:213.7px;top:499.78px;width:1.2px;height:19.72px;background:#222"></div>
<div style="left:309.9px;top:499.78px;width:1.2px;height:19.72px;background:#222"></div>
<div style="top:523.42px;font-size:13px;line-height:13px;font-weight:400;color:#111;white-space:nowrap;letter-spacing:0.55px;left:24.7px;">motor flanged to gearbox</div>
<div style="top:524.49px;font-size:11.5px;line-height:11.5px;font-weight:400;color:#111;white-space:nowrap;left:218.9px;">No</div>
<svg style="left:293px;top:519.5px" width="18" height="20"><rect x="0.5" y="0.5" width="16" height="18" fill="#f4f4f4"/><path d="M16.5 0 v19.5 M1 18.7 h16" stroke="#333" stroke-width="2"/><path d="M4.5 7.5 h8 l-4 4.5 z" fill="#000"/></svg>
<div style="left:21.5px;top:518.95px;width:337.6px;height:1.1px;background:#222"></div>
<div style="left:213.7px;top:519.5px;width:1.2px;height:19.72px;background:#222"></div>
<div style="left:309.9px;top:519.5px;width:1.2px;height:19.72px;background:#222"></div>
<div style="left:21.5px;top:557.74px;width:338.6px;height:2.4px;background:#000"></div>
<div style="left:21.5px;top:616.9px;width:338.6px;height:2.4px;background:#000"></div>
<div style="left:21.4px;top:558.94px;width:1.4px;height:59.16px;background:#000"></div>
<div style="left:357.9px;top:557.94px;width:2.4px;height:61.16px;background:#000"></div>
<div style="left:22.5px;top:558.94px;width:336.6px;height:19.72px;background:#d9d9d9"></div>
<div style="top:563.98px;font-size:12px;line-height:12px;font-weight:700;color:#000;white-space:nowrap;letter-spacing:-0.2px;left:40.3px;width:300px;text-align:center;">COUPLING</div>
<div style="left:21.5px;top:577.46px;width:337.6px;height:2.4px;background:#000"></div>
<div style="left:214.4px;top:578.66px;width:96.6px;height:19.72px;background:#ffc000"></div>
<div style="top:582.58px;font-size:13px;line-height:13px;font-weight:400;color:#111;white-space:nowrap;letter-spacing:0.55px;left:24.7px;">coupling weight motor side</div>
<div style="top:582.58px;font-size:13px;line-height:13px;font-weight:400;color:#111;white-space:nowrap;letter-spacing:0.2px;left:217.5px;width:90px;text-align:right;">30</div>
<div style="top:582.58px;font-size:13px;line-height:13px;font-weight:400;color:#111;white-space:nowrap;letter-spacing:0.3px;left:313.5px;">kg</div>
<div style="left:213.7px;top:578.66px;width:1.2px;height:19.72px;background:#222"></div>
<div style="left:309.9px;top:578.66px;width:1.2px;height:19.72px;background:#222"></div>
<div style="left:214.4px;top:598.38px;width:96.6px;height:19.72px;background:#ffc000"></div>
<div style="top:602.3px;font-size:13px;line-height:13px;font-weight:400;color:#111;white-space:nowrap;letter-spacing:0.55px;left:24.7px;">coupling weight SCP side</div>
<div style="top:602.3px;font-size:13px;line-height:13px;font-weight:400;color:#111;white-space:nowrap;letter-spacing:0.2px;left:217.5px;width:90px;text-align:right;">210</div>
<div style="top:602.3px;font-size:13px;line-height:13px;font-weight:400;color:#111;white-space:nowrap;letter-spacing:0.3px;left:313.5px;">kg</div>
<div style="left:21.5px;top:597.83px;width:337.6px;height:1.1px;background:#222"></div>
<div style="left:213.7px;top:598.38px;width:1.2px;height:19.72px;background:#222"></div>
<div style="left:309.9px;top:598.38px;width:1.2px;height:19.72px;background:#222"></div>
<div style="left:21.5px;top:636.62px;width:338.6px;height:2.4px;background:#000"></div>
<div style="left:21.5px;top:735.22px;width:338.6px;height:2.4px;background:#000"></div>
<div style="left:21.4px;top:637.82px;width:1.4px;height:98.6px;background:#000"></div>
<div style="left:357.9px;top:636.82px;width:2.4px;height:100.6px;background:#000"></div>
<div style="left:22.5px;top:637.82px;width:336.6px;height:19.72px;background:#d9d9d9"></div>
<div style="top:642.86px;font-size:12px;line-height:12px;font-weight:700;color:#000;white-space:nowrap;letter-spacing:-0.2px;left:40.3px;width:300px;text-align:center;">GEARBOX</div>
<div style="left:21.5px;top:656.34px;width:337.6px;height:2.4px;background:#000"></div>
<div style="left:214.4px;top:657.54px;width:96.6px;height:19.72px;background:#ffc000"></div>
<div style="top:661.46px;font-size:13px;line-height:13px;font-weight:400;color:#111;white-space:nowrap;letter-spacing:0.55px;left:24.7px;">gearbox weight</div>
<div style="top:661.46px;font-size:13px;line-height:13px;font-weight:400;color:#111;white-space:nowrap;letter-spacing:0.2px;left:217.5px;width:90px;text-align:right;">2102</div>
<div style="top:661.46px;font-size:13px;line-height:13px;font-weight:400;color:#111;white-space:nowrap;letter-spacing:0.3px;left:313.5px;">kg</div>
<div style="left:213.7px;top:657.54px;width:1.2px;height:19.72px;background:#222"></div>
<div style="left:309.9px;top:657.54px;width:1.2px;height:19.72px;background:#222"></div>
<div style="left:214.4px;top:677.26px;width:96.6px;height:19.72px;background:#ffc000"></div>
<div style="top:681.18px;font-size:13px;line-height:13px;font-weight:400;color:#111;white-space:nowrap;letter-spacing:0.55px;left:24.7px;">gear ratio</div>
<div style="top:681.18px;font-size:13px;line-height:13px;font-weight:400;color:#111;white-space:nowrap;letter-spacing:0.2px;left:217.5px;width:90px;text-align:right;">50,847</div>
<div style="top:681.18px;font-size:13px;line-height:13px;font-weight:400;color:#111;white-space:nowrap;letter-spacing:0.3px;left:313.5px;">:1</div>
<div style="left:21.5px;top:676.71px;width:337.6px;height:1.1px;background:#222"></div>
<div style="left:213.7px;top:677.26px;width:1.2px;height:19.72px;background:#222"></div>
<div style="left:309.9px;top:677.26px;width:1.2px;height:19.72px;background:#222"></div>
<div style="top:700.9px;font-size:13px;line-height:13px;font-weight:400;color:#111;white-space:nowrap;letter-spacing:0.55px;left:24.7px;">planetary gearbox</div>
<div style="top:701.97px;font-size:11.5px;line-height:11.5px;font-weight:400;color:#111;white-space:nowrap;left:218.9px;">No</div>
<svg style="left:293px;top:696.98px" width="18" height="20"><rect x="0.5" y="0.5" width="16" height="18" fill="#f4f4f4"/><path d="M16.5 0 v19.5 M1 18.7 h16" stroke="#333" stroke-width="2"/><path d="M4.5 7.5 h8 l-4 4.5 z" fill="#000"/></svg>
<div style="left:21.5px;top:696.43px;width:337.6px;height:1.1px;background:#222"></div>
<div style="left:213.7px;top:696.98px;width:1.2px;height:19.72px;background:#222"></div>
<div style="left:309.9px;top:696.98px;width:1.2px;height:19.72px;background:#222"></div>
<div style="top:720.62px;font-size:13px;line-height:13px;font-weight:400;color:#111;white-space:nowrap;letter-spacing:0.55px;left:24.7px;">shaft mounted gearbox</div>
<div style="top:721.69px;font-size:11.5px;line-height:11.5px;font-weight:400;color:#111;white-space:nowrap;left:218.9px;">No</div>
<svg style="left:293px;top:716.7px" width="18" height="20"><rect x="0.5" y="0.5" width="16" height="18" fill="#f4f4f4"/><path d="M16.5 0 v19.5 M1 18.7 h16" stroke="#333" stroke-width="2"/><path d="M4.5 7.5 h8 l-4 4.5 z" fill="#000"/></svg>
<div style="left:21.5px;top:716.15px;width:337.6px;height:1.1px;background:#222"></div>
<div style="left:213.7px;top:716.7px;width:1.2px;height:19.72px;background:#222"></div>
<div style="left:309.9px;top:716.7px;width:1.2px;height:19.72px;background:#222"></div>
<div style="left:213.4px;top:932.62px;width:98.1px;height:21.72px;border:2px solid #1e6b40"></div>
<div style="left:308px;top:950.34px;width:6px;height:6px;background:#1e6b40;border:1px solid #fff"></div>
<div style="left:428px;top:362px;width:202px;height:39.5px;background:#e6e6ea;border-right:2px solid #6a6a66;border-bottom:2.5px solid #6a6a66"></div>
<div style="top:375.46px;font-size:12.8px;line-height:12.8px;font-weight:400;color:#111;white-space:nowrap;left:428.5px;width:200px;text-align:center;">Regenerate Drawing</div>
<div style="left:429px;top:501px;width:200px;height:37.5px;background:#e6e6ea;border-right:2px solid #6a6a66;border-bottom:2.5px solid #6a6a66"></div>
<div style="top:514.46px;font-size:12.8px;line-height:12.8px;font-weight:400;color:#111;white-space:nowrap;left:428.3px;width:200px;text-align:center;">Calculate Foundationloads</div>
<div style="left:756.98px;top:263.14px;width:157.82px;height:19.72px;background:#92d050"></div>
<div style="left:914.8px;top:263.14px;width:552.36px;height:19.72px;background:#fdfdfb"></div>
<div style="top:267.85px;font-size:12.3px;line-height:12.3px;font-weight:700;color:#111;white-space:nowrap;left:735.89px;width:200px;text-align:center;">green cell</div>
<div style="top:268.02px;font-size:12.1px;line-height:12.1px;font-weight:700;color:#111;white-space:nowrap;left:910.97px;width:560px;text-align:center;">percentage of torque consumption in dewatering area (total 100%)</div>
<div style="left:756.98px;top:262.04px;width:711.17px;height:2.2px;background:#000"></div>
<div style="left:756.98px;top:282.86px;width:157.82px;height:19.72px;background:#ffc000"></div>
<div style="left:914.8px;top:282.86px;width:552.36px;height:19.72px;background:#fdfdfb"></div>
<div style="top:287.57px;font-size:12.3px;line-height:12.3px;font-weight:700;color:#111;white-space:nowrap;left:735.89px;width:200px;text-align:center;">orange dimensions</div>
<div style="top:287.74px;font-size:12.1px;line-height:12.1px;font-weight:700;color:#111;white-space:nowrap;left:910.97px;width:560px;text-align:center;">essential for the calculation please enter! [mm]</div>
<div style="left:756.98px;top:281.76px;width:711.17px;height:2.2px;background:#000"></div>
<div style="left:756.98px;top:302.58px;width:157.82px;height:19.72px;background:#969696"></div>
<div style="left:914.8px;top:302.58px;width:552.36px;height:19.72px;background:#fdfdfb"></div>
<div style="top:307.29px;font-size:12.3px;line-height:12.3px;font-weight:700;color:#111;white-space:nowrap;left:735.89px;width:200px;text-align:center;">gray dimensions</div>
<div style="top:307.46px;font-size:12.1px;line-height:12.1px;font-weight:700;color:#111;white-space:nowrap;left:910.97px;width:560px;text-align:center;">have no impact on the calculation, not actually needed. [mm]</div>
<div style="left:756.98px;top:301.48px;width:711.17px;height:2.2px;background:#000"></div>
<div style="left:756.98px;top:321.2px;width:711.17px;height:2.2px;background:#000"></div>
<div style="left:755.88px;top:263.14px;width:2.2px;height:59.16px;background:#000"></div>
<div style="left:913.7px;top:263.14px;width:2.2px;height:59.16px;background:#000"></div>
<div style="left:1466.05px;top:263.14px;width:2.2px;height:59.16px;background:#000"></div>
<svg style="left:0;top:0" width="1920" height="1080"><defs><pattern id="hatch" width="4" height="4" patternUnits="userSpaceOnUse" patternTransform="rotate(45)"><rect width="4" height="4" fill="#f2f29a"/><rect width="1.8" height="4" fill="#7d7d2a"/></pattern></defs><path d="M1925 322.5 H697.8 V972.5 H1925" fill="none" stroke="#000" stroke-width="2.2"/><rect x="1546.06" y="578.66" width="157.82" height="39.44" fill="#d2d2d2"/><rect x="1644.7" y="539.22" width="19.73" height="118.32" fill="#d2d2d2"/><rect x="1664.42" y="558.94" width="19.73" height="78.88" fill="#d2d2d2"/><path d="M720 598.38 L1925 598.38" stroke="#111" stroke-width="1.5" fill="none" stroke-dasharray="10 3.5 3 3.5" stroke-dashoffset="0"/><path d="M720 756.14 L1013 756.14" stroke="#111" stroke-width="1.5" fill="none" stroke-dasharray="10 3.5 3 3.5" stroke-dashoffset="0"/><path d="M1388.24 345 L1388.24 955" stroke="#111" stroke-width="1.5" fill="none" stroke-dasharray="10 3.5 3 3.5" stroke-dashoffset="0"/><path d="M1861.69 345 L1861.69 955" stroke="#111" stroke-width="1.5" fill="none" stroke-dasharray="10 3.5 3 3.5" stroke-dashoffset="0"/><path d="M796.43 696.98 H875.62" stroke="#111" stroke-width="1.5" fill="none" stroke-dasharray="10 3.5 3 3.5"/><path d="M835.89 657.26 V677.26" stroke="#111" stroke-width="1.5" fill="none" stroke-dasharray="10 3.5 3 3.5"/><path d="M835.89 716.7 V736.7" stroke="#111" stroke-width="1.5" fill="none" stroke-dasharray="10 3.5 3 3.5"/><path d="M796.43 815.3 H875.62" stroke="#111" stroke-width="1.5" fill="none" stroke-dasharray="10 3.5 3 3.5"/><path d="M835.89 775.58 V795.58" stroke="#111" stroke-width="1.5" fill="none" stroke-dasharray="10 3.5 3 3.5"/><path d="M835.89 835.02 V854.74" stroke="#111" stroke-width="1.5" fill="none" stroke-dasharray="10 3.5 3 3.5"/><path d="M914.52 696.98 H993.98" stroke="#111" stroke-width="1.5" fill="none" stroke-dasharray="10 3.5 3 3.5"/><path d="M954.25 657.26 V677.26" stroke="#111" stroke-width="1.5" fill="none" stroke-dasharray="10 3.5 3 3.5"/><path d="M954.25 716.7 V736.7" stroke="#111" stroke-width="1.5" fill="none" stroke-dasharray="10 3.5 3 3.5"/><path d="M914.52 815.3 H993.98" stroke="#111" stroke-width="1.5" fill="none" stroke-dasharray="10 3.5 3 3.5"/><path d="M954.25 775.58 V795.58" stroke="#111" stroke-width="1.5" fill="none" stroke-dasharray="10 3.5 3 3.5"/><path d="M954.25 835.02 V854.74" stroke="#111" stroke-width="1.5" fill="none" stroke-dasharray="10 3.5 3 3.5"/><path d="M1033.16 539.22 H1112.34" stroke="#111" stroke-width="1.5" fill="none" stroke-dasharray="10 3.5 3 3.5"/><path d="M1072.61 499.5 V519.5" stroke="#111" stroke-width="1.5" fill="none" stroke-dasharray="10 3.5 3 3.5"/><path d="M1072.61 558.94 V578.94" stroke="#111" stroke-width="1.5" fill="none" stroke-dasharray="10 3.5 3 3.5"/><path d="M1032.89 657.54 H1112.34" stroke="#111" stroke-width="1.5" fill="none" stroke-dasharray="10 3.5 3 3.5"/><path d="M1072.61 617.82 V637.82" stroke="#111" stroke-width="1.5" fill="none" stroke-dasharray="10 3.5 3 3.5"/><path d="M1072.61 677.26 V697.26" stroke="#111" stroke-width="1.5" fill="none" stroke-dasharray="10 3.5 3 3.5"/><path d="M1032.89 775.86 H1112.34" stroke="#111" stroke-width="1.5" fill="none" stroke-dasharray="10 3.5 3 3.5"/><path d="M1072.61 736.14 V756.14" stroke="#111" stroke-width="1.5" fill="none" stroke-dasharray="10 3.5 3 3.5"/><path d="M1072.61 795.58 V815.3" stroke="#111" stroke-width="1.5" fill="none" stroke-dasharray="10 3.5 3 3.5"/><path d="M1151.25 539.22 H1230.43" stroke="#111" stroke-width="1.5" fill="none" stroke-dasharray="10 3.5 3 3.5"/><path d="M1190.97 440.62 V519.5" stroke="#111" stroke-width="1.5" fill="none" stroke-dasharray="10 3.5 3 3.5"/><path d="M1190.97 558.94 V578.94" stroke="#111" stroke-width="1.5" fill="none" stroke-dasharray="10 3.5 3 3.5"/><path d="M1151.25 657.54 H1230.43" stroke="#111" stroke-width="1.5" fill="none" stroke-dasharray="10 3.5 3 3.5"/><path d="M1190.97 617.82 V637.82" stroke="#111" stroke-width="1.5" fill="none" stroke-dasharray="10 3.5 3 3.5"/><path d="M1190.97 677.26 V697.26" stroke="#111" stroke-width="1.5" fill="none" stroke-dasharray="10 3.5 3 3.5"/><path d="M1151.25 775.86 H1230.43" stroke="#111" stroke-width="1.5" fill="none" stroke-dasharray="10 3.5 3 3.5"/><path d="M1190.97 736.14 V756.14" stroke="#111" stroke-width="1.5" fill="none" stroke-dasharray="10 3.5 3 3.5"/><path d="M1190.97 795.58 V815.3" stroke="#111" stroke-width="1.5" fill="none" stroke-dasharray="10 3.5 3 3.5"/><path d="M1269.61 480.06 H1349.06" stroke="#111" stroke-width="1.5" fill="none" stroke-dasharray="10 3.5 3 3.5"/><path d="M1309.34 440.62 V460.34" stroke="#111" stroke-width="1.5" fill="none" stroke-dasharray="10 3.5 3 3.5"/><path d="M1309.34 499.78 V519.78" stroke="#111" stroke-width="1.5" fill="none" stroke-dasharray="10 3.5 3 3.5"/><path d="M1269.61 716.7 H1349.06" stroke="#111" stroke-width="1.5" fill="none" stroke-dasharray="10 3.5 3 3.5"/><path d="M1309.34 676.98 V696.98" stroke="#111" stroke-width="1.5" fill="none" stroke-dasharray="10 3.5 3 3.5"/><path d="M1309.34 736.42 V756.14" stroke="#111" stroke-width="1.5" fill="none" stroke-dasharray="10 3.5 3 3.5"/><path d="M1427.43 480.06 H1506.88" stroke="#111" stroke-width="1.5" fill="none" stroke-dasharray="10 3.5 3 3.5"/><path d="M1467.15 440.62 V460.34" stroke="#111" stroke-width="1.5" fill="none" stroke-dasharray="10 3.5 3 3.5"/><path d="M1467.15 499.78 V519.78" stroke="#111" stroke-width="1.5" fill="none" stroke-dasharray="10 3.5 3 3.5"/><path d="M1427.43 716.7 H1506.88" stroke="#111" stroke-width="1.5" fill="none" stroke-dasharray="10 3.5 3 3.5"/><path d="M1467.15 676.98 V696.98" stroke="#111" stroke-width="1.5" fill="none" stroke-dasharray="10 3.5 3 3.5"/><path d="M1467.15 736.42 V756.14" stroke="#111" stroke-width="1.5" fill="none" stroke-dasharray="10 3.5 3 3.5"/><path d="M1585.24 480.06 H1664.7" stroke="#111" stroke-width="1.5" fill="none" stroke-dasharray="10 3.5 3 3.5"/><path d="M1624.97 440.62 V460.34" stroke="#111" stroke-width="1.5" fill="none" stroke-dasharray="10 3.5 3 3.5"/><path d="M1624.97 499.78 V519.78" stroke="#111" stroke-width="1.5" fill="none" stroke-dasharray="10 3.5 3 3.5"/><path d="M1585.24 716.7 H1664.7" stroke="#111" stroke-width="1.5" fill="none" stroke-dasharray="10 3.5 3 3.5"/><path d="M1624.97 676.98 V696.98" stroke="#111" stroke-width="1.5" fill="none" stroke-dasharray="10 3.5 3 3.5"/><path d="M1624.97 736.42 V756.14" stroke="#111" stroke-width="1.5" fill="none" stroke-dasharray="10 3.5 3 3.5"/><path d="M1743.06 480.06 H1822.51" stroke="#111" stroke-width="1.5" fill="none" stroke-dasharray="10 3.5 3 3.5"/><path d="M1782.79 440.62 V460.34" stroke="#111" stroke-width="1.5" fill="none" stroke-dasharray="10 3.5 3 3.5"/><path d="M1782.79 499.78 V519.78" stroke="#111" stroke-width="1.5" fill="none" stroke-dasharray="10 3.5 3 3.5"/><path d="M1743.06 716.7 H1822.51" stroke="#111" stroke-width="1.5" fill="none" stroke-dasharray="10 3.5 3 3.5"/><path d="M1782.79 676.98 V696.98" stroke="#111" stroke-width="1.5" fill="none" stroke-dasharray="10 3.5 3 3.5"/><path d="M1782.79 736.42 V756.14" stroke="#111" stroke-width="1.5" fill="none" stroke-dasharray="10 3.5 3 3.5"/><path d="M1900.87 480.06 H1980.33" stroke="#111" stroke-width="1.5" fill="none" stroke-dasharray="10 3.5 3 3.5"/><path d="M1940.6 440.62 V460.34" stroke="#111" stroke-width="1.5" fill="none" stroke-dasharray="10 3.5 3 3.5"/><path d="M1940.6 499.78 V519.78" stroke="#111" stroke-width="1.5" fill="none" stroke-dasharray="10 3.5 3 3.5"/><path d="M1900.87 716.7 H1980.33" stroke="#111" stroke-width="1.5" fill="none" stroke-dasharray="10 3.5 3 3.5"/><path d="M1940.6 676.98 V696.98" stroke="#111" stroke-width="1.5" fill="none" stroke-dasharray="10 3.5 3 3.5"/><path d="M1940.6 736.42 V756.14" stroke="#111" stroke-width="1.5" fill="none" stroke-dasharray="10 3.5 3 3.5"/><rect x="776.71" y="696.98" width="19.73" height="118.32" fill="#979797" stroke="#000" stroke-width="2"/><rect x="1013.43" y="539.22" width="19.73" height="59.16" fill="#979797" stroke="#000" stroke-width="2"/><rect x="835.89" y="854.74" width="236.72" height="19.72" fill="#979797" stroke="#000" stroke-width="2"/><path d="M954.25 854.74 V874.46" stroke="#000" stroke-width="2"/><rect x="1072.61" y="815.3" width="118.36" height="19.72" fill="#979797" stroke="#000" stroke-width="2"/><rect x="1190.97" y="420.9" width="118.36" height="19.72" fill="#979797" stroke="#000" stroke-width="2"/><rect x="1388.24" y="420.9" width="473.45" height="19.72" fill="#979797" stroke="#000" stroke-width="2"/><rect x="1309.34" y="756.14" width="620.66" height="19.72" fill="#979797" stroke="#000" stroke-width="2"/><path d="M1467.15 756.14 V775.86" stroke="#000" stroke-width="2"/><path d="M1624.97 756.14 V775.86" stroke="#000" stroke-width="2"/><path d="M1782.79 756.14 V775.86" stroke="#000" stroke-width="2"/><rect x="1230.43" y="539.22" width="19.73" height="236.64" fill="#ffc000" stroke="#000" stroke-width="2"/><path d="M1230.43 598.38 H1250.16" stroke="#000" stroke-width="2"/><rect x="1348.79" y="558.94" width="78.91" height="78.88" fill="url(#hatch)" stroke="#000" stroke-width="2.2"/><rect x="1822.24" y="539.22" width="78.91" height="118.32" fill="url(#hatch)" stroke="#000" stroke-width="2.2"/><rect x="816.16" y="677.26" width="39.45" height="39.44" fill="#000"/><rect x="816.16" y="795.58" width="39.45" height="39.44" fill="#000"/><rect x="934.52" y="677.26" width="39.45" height="39.44" fill="#000"/><rect x="934.52" y="795.58" width="39.45" height="39.44" fill="#000"/><rect x="1052.89" y="519.5" width="39.45" height="39.44" fill="#000"/><rect x="1052.89" y="637.82" width="39.45" height="39.44" fill="#000"/><rect x="1052.89" y="756.14" width="39.45" height="39.44" fill="#000"/><rect x="1171.25" y="519.5" width="39.45" height="39.44" fill="#000"/><rect x="1171.25" y="637.82" width="39.45" height="39.44" fill="#000"/><rect x="1171.25" y="756.14" width="39.45" height="39.44" fill="#000"/><rect x="1289.61" y="460.34" width="39.45" height="39.44" fill="#000"/><rect x="1289.61" y="696.98" width="39.45" height="39.44" fill="#000"/><rect x="1447.43" y="460.34" width="39.45" height="39.44" fill="#000"/><rect x="1447.43" y="696.98" width="39.45" height="39.44" fill="#000"/><rect x="1605.24" y="460.34" width="39.45" height="39.44" fill="#000"/><rect x="1605.24" y="696.98" width="39.45" height="39.44" fill="#000"/><rect x="1763.06" y="460.34" width="39.45" height="39.44" fill="#000"/><rect x="1763.06" y="696.98" width="39.45" height="39.44" fill="#000"/><rect x="1289.61" y="795.58" width="39.45" height="19.72" fill="#92d050" stroke="#000" stroke-width="2"/><rect x="1447.43" y="795.58" width="39.45" height="19.72" fill="#92d050" stroke="#000" stroke-width="2"/><rect x="1605.24" y="795.58" width="39.45" height="19.72" fill="#92d050" stroke="#000" stroke-width="2"/><rect x="1763.06" y="795.58" width="39.45" height="19.72" fill="#92d050" stroke="#000" stroke-width="2"/><rect x="1920.87" y="795.58" width="39.45" height="19.72" fill="#92d050" stroke="#000" stroke-width="2"/></svg>
<div style="top:689.59px;font-size:17px;line-height:17px;font-weight:700;color:#fff;white-space:nowrap;left:805.89px;width:60px;text-align:center;">1</div>
<div style="top:807.91px;font-size:17px;line-height:17px;font-weight:700;color:#fff;white-space:nowrap;left:805.89px;width:60px;text-align:center;">2</div>
<div style="top:689.59px;font-size:17px;line-height:17px;font-weight:700;color:#fff;white-space:nowrap;left:924.25px;width:60px;text-align:center;">3</div>
<div style="top:807.91px;font-size:17px;line-height:17px;font-weight:700;color:#fff;white-space:nowrap;left:924.25px;width:60px;text-align:center;">4</div>
<div style="top:531.83px;font-size:17px;line-height:17px;font-weight:700;color:#fff;white-space:nowrap;left:1042.61px;width:60px;text-align:center;">5</div>
<div style="top:650.15px;font-size:17px;line-height:17px;font-weight:700;color:#fff;white-space:nowrap;left:1042.61px;width:60px;text-align:center;">6</div>
<div style="top:768.47px;font-size:17px;line-height:17px;font-weight:700;color:#fff;white-space:nowrap;left:1042.61px;width:60px;text-align:center;">7</div>
<div style="top:531.83px;font-size:17px;line-height:17px;font-weight:700;color:#fff;white-space:nowrap;left:1160.97px;width:60px;text-align:center;">8</div>
<div style="top:650.15px;font-size:17px;line-height:17px;font-weight:700;color:#fff;white-space:nowrap;left:1160.97px;width:60px;text-align:center;">9</div>
<div style="top:768.47px;font-size:17px;line-height:17px;font-weight:700;color:#fff;white-space:nowrap;left:1160.97px;width:60px;text-align:center;">10</div>
<div style="top:472.67px;font-size:17px;line-height:17px;font-weight:700;color:#fff;white-space:nowrap;left:1279.34px;width:60px;text-align:center;">11</div>
<div style="top:709.31px;font-size:17px;line-height:17px;font-weight:700;color:#fff;white-space:nowrap;left:1279.34px;width:60px;text-align:center;">12</div>
<div style="top:472.67px;font-size:17px;line-height:17px;font-weight:700;color:#fff;white-space:nowrap;left:1437.15px;width:60px;text-align:center;">13</div>
<div style="top:709.31px;font-size:17px;line-height:17px;font-weight:700;color:#fff;white-space:nowrap;left:1437.15px;width:60px;text-align:center;">14</div>
<div style="top:472.67px;font-size:17px;line-height:17px;font-weight:700;color:#fff;white-space:nowrap;left:1594.97px;width:60px;text-align:center;">15</div>
<div style="top:709.31px;font-size:17px;line-height:17px;font-weight:700;color:#fff;white-space:nowrap;left:1594.97px;width:60px;text-align:center;">16</div>
<div style="top:472.67px;font-size:17px;line-height:17px;font-weight:700;color:#fff;white-space:nowrap;left:1752.79px;width:60px;text-align:center;">17</div>
<div style="top:709.31px;font-size:17px;line-height:17px;font-weight:700;color:#fff;white-space:nowrap;left:1752.79px;width:60px;text-align:center;">18</div>
<div style="top:800.1px;font-size:13px;line-height:13px;font-weight:700;color:#111;white-space:nowrap;left:1279.34px;width:60px;text-align:center;">20</div>
<div style="top:800.1px;font-size:13px;line-height:13px;font-weight:700;color:#111;white-space:nowrap;left:1437.15px;width:60px;text-align:center;">20</div>
<div style="top:800.1px;font-size:13px;line-height:13px;font-weight:700;color:#111;white-space:nowrap;left:1594.97px;width:60px;text-align:center;">20</div>
<div style="top:800.1px;font-size:13px;line-height:13px;font-weight:700;color:#111;white-space:nowrap;left:1752.79px;width:60px;text-align:center;">20</div>
<div style="top:590.07px;font-size:17.5px;line-height:17.5px;font-weight:700;color:#111;white-space:nowrap;left:1338.24px;width:100px;text-align:center;">Inlet</div>
<div style="top:590.07px;font-size:17.5px;line-height:17.5px;font-weight:700;color:#111;white-space:nowrap;left:1811.69px;width:100px;text-align:center;">Outlet</div>
<div style="top:582.18px;font-size:11.6px;line-height:11.6px;font-weight:400;color:#222;white-space:nowrap;letter-spacing:0.5px;left:1545.5px;width:160px;text-align:center;">view direction of</div>
<div style="top:602.18px;font-size:11.6px;line-height:11.6px;font-weight:400;color:#222;white-space:nowrap;letter-spacing:0.55px;left:1545px;width:160px;text-align:center;">the screw rotation</div>
<div style="top:562.69px;font-size:11px;line-height:11px;font-weight:400;color:#333;white-space:nowrap;left:1231px;width:20px;text-align:center;transform:rotate(90deg);">0</div>
<div style="top:681.69px;font-size:11px;line-height:11px;font-weight:400;color:#333;white-space:nowrap;left:1231px;width:20px;text-align:center;transform:rotate(90deg);">0</div>
<svg style="left:0;top:0" width="1920" height="1080"><path d="M636.5 665.5 H643.5 V670.5 H648.5 V677.5 H643.5 V682 H636.5 V677.5 H631.5 V670.5 H636.5 Z" fill="#fff" stroke="#000" stroke-width="1.7" stroke-linejoin="round"/></svg>
</body></html>
